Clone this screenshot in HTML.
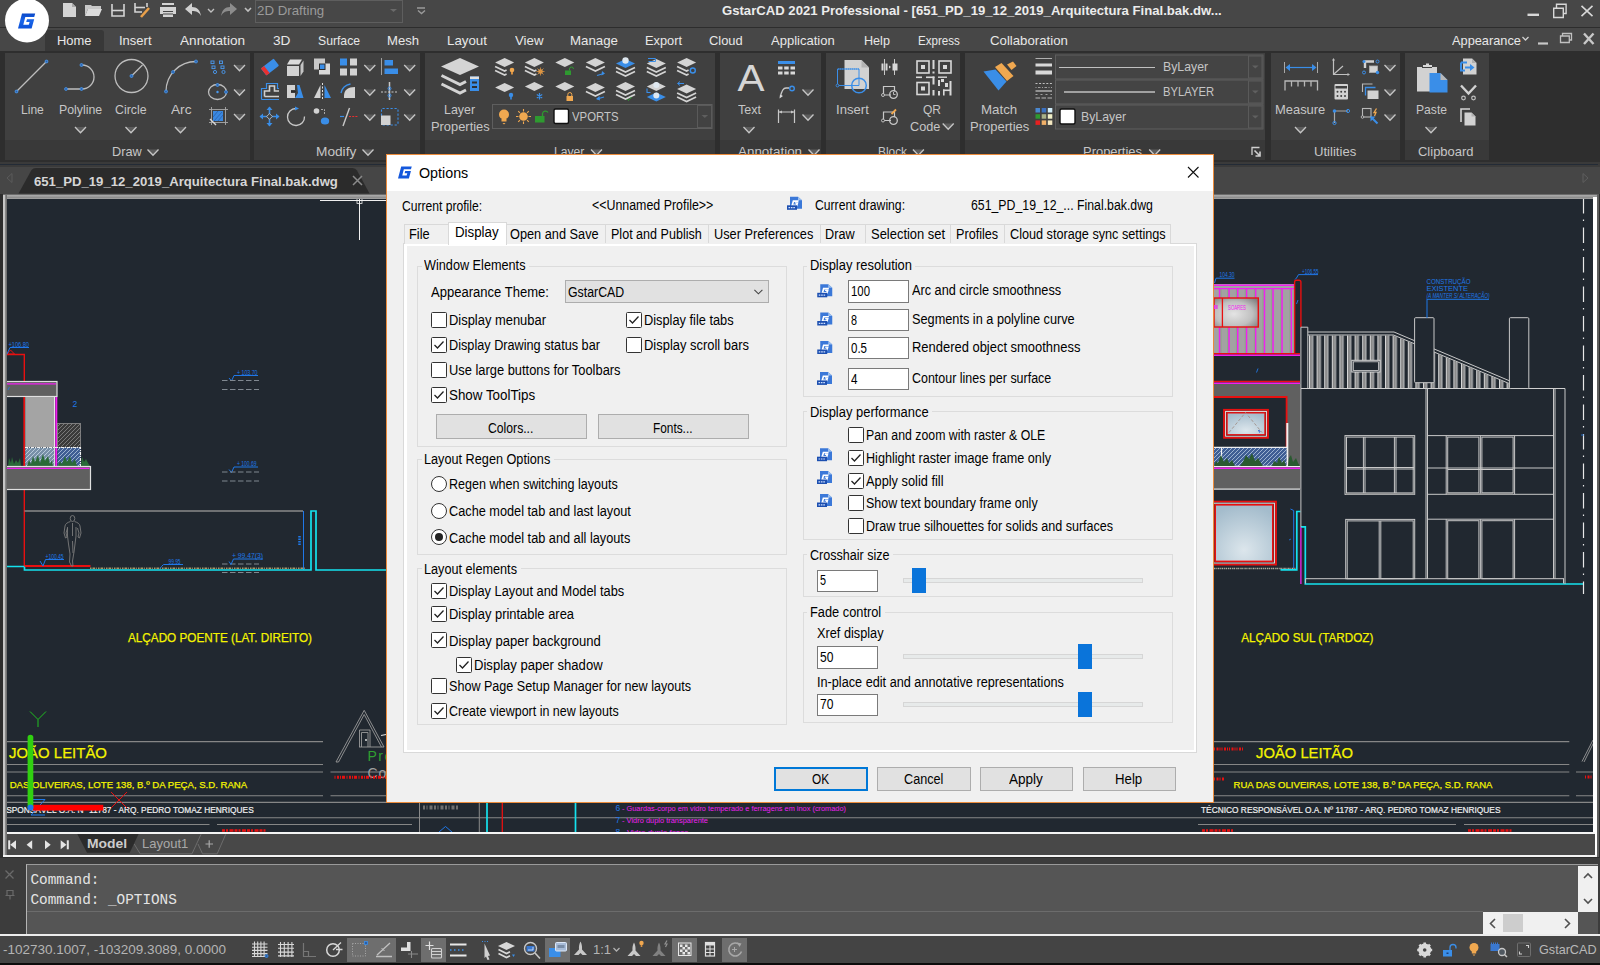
<!DOCTYPE html>
<html><head><meta charset="utf-8">
<style>
*{box-sizing:border-box;margin:0;padding:0}
html,body{width:1600px;height:965px;overflow:hidden;background:#2d2d2d;font-family:"Liberation Sans",sans-serif;}
.abs{position:absolute}
#titlebar{position:absolute;left:0;top:0;width:1600px;height:27px;background:#474747}
#tabrow{position:absolute;left:0;top:28px;width:1600px;height:23px;background:#474747}
#ribbon{position:absolute;left:0;top:51px;width:1600px;height:111px;background:#2e2e2e}
.panel{position:absolute;top:2px;height:107px;background:#404040}
.panel .ptitle{position:absolute;left:0;right:0;bottom:0;height:20px;background:#393939;color:#b8b8b8;font-size:14px;text-align:center;line-height:20px}
.mt{position:absolute;top:4px;color:#e6e6e6;font-size:14px;line-height:16px;white-space:nowrap}
.rl{position:absolute;color:#c4c4c4;font-size:13px;line-height:18px;white-space:nowrap;text-align:center}
#filetabs{position:absolute;left:0;top:166.700px;width:1600px;height:27.300px;background:#464646}
#draw{position:absolute;left:6px;top:198px;width:1588px;height:634px;background:#212830;overflow:hidden}
#layouttabs{position:absolute;left:6.500px;top:833.700px;width:1588.500px;height:21.100px;background:#484848}
#cmd{position:absolute;left:0;top:858px;width:1600px;height:78px;background:#3c3c3c}
#status{position:absolute;left:0;top:936px;width:1600px;height:29px;background:#444444}
#dlg{position:absolute;left:387px;top:154px;width:827px;height:648px;background:#f0f0f0;border:1px solid #e8893a}
</style></head><body>
<div id="titlebar">
<svg class="abs" style="left:0;top:0" width="460" height="27" viewBox="0 0 460 27">
<!-- new -->
<path d="M63 3h9l4 4v10h-13z" fill="#d4d4d4"/><path d="M72 3l4 4h-4z" fill="#a8a8a8"/>
<!-- open -->
<path d="M85 5h6l1 1h9v3h-13l-3 7z" fill="#c8c8c8"/><path d="M88 9h14l-3 7h-14z" fill="#dcdcdc"/>
<!-- save -->
<path d="M112 4v12h12v-12" fill="none" stroke="#d4d4d4" stroke-width="1.6"/><path d="M112 10.5h12" stroke="#d4d4d4" stroke-width="1.6"/>
<!-- saveas -->
<path d="M135 3v9h7M147 3v4" fill="none" stroke="#d4d4d4" stroke-width="1.6"/><path d="M135 7.5h10" stroke="#d4d4d4" stroke-width="1.6"/><path d="M141 17l8-9" stroke="#e9a04a" stroke-width="2.6"/>
<!-- print -->
<path d="M162 3h12v2h-12zM160 7h16v7h-16zM163 11h10v6h-10z" fill="#d4d4d4"/><path d="M163 11.5h10M163 14h10" stroke="#474747" stroke-width="1"/>
<!-- undo -->
<path d="M185 9l7-6v4c5 0 8 3 9 9c-2-4-5-5-9-5v4z" fill="#d0d0d0"/>
<path d="M208 9l3 3l3-3" fill="none" stroke="#c0c0c0" stroke-width="1.4"/>
<!-- redo -->
<path d="M237 9l-7-6v4c-5 0-8 3-9 9c2-4 5-5 9-5v4z" fill="#8c8c8c"/>
<path d="M245 8l3 3l3-3" fill="none" stroke="#c0c0c0" stroke-width="1.6"/>
<rect x="255.500" y="0.500" width="147" height="22" fill="none" stroke="#5e5e5e"/>
<path d="M390 9l3.500 3l3.500-3z" fill="#6a6a6a"/>
<path d="M417 8h8M418 10.500l3.500 3l3.500-3" fill="none" stroke="#9a9a9a" stroke-width="1.400"/>
</svg>
<svg class="abs" style="left:1520px;top:0" width="80" height="27" viewBox="1520 0 80 27">
<path d="M1527.500 14.800h11.500" stroke="#d8d8d8" stroke-width="2.400"/>
<path d="M1553.700 8.200h9.600v9.300h-9.600zM1556.500 8v-3.800h9.600v9.300h-2.800" fill="none" stroke="#d8d8d8" stroke-width="1.400"/>
<path d="M1581.500 5.800l11 10.400M1592.500 5.800l-11 10.400" stroke="#d8d8d8" stroke-width="1.600"/>
</svg>
</div>
<div id="tabrow"><div class="abs" style="left:45px;top:2px;width:59px;height:21px;background:#383838;border-radius:3px 3px 0 0"></div><svg class="abs" style="left:1518px;top:0" width="82" height="23" viewBox="1518 28 82 23">
<path d="M1522.500 37l3 3l3-3" fill="none" stroke="#d0d0d0" stroke-width="1.300"/>
<path d="M1538 43.500h10" stroke="#c8c8c8" stroke-width="2.200"/>
<path d="M1560.500 36h8.800v6.500h-8.800zM1562.500 35.500v-2h9v6.500h-2" fill="none" stroke="#c0c0c0" stroke-width="1.300"/>
<path d="M1584 33.500l9.500 10.500M1593.500 33.500l-9.500 10.500" stroke="#c8c8c8" stroke-width="2.400"/>
</svg></div>
<svg class="abs" style="left:0;top:0;z-index:5" width="56" height="48" viewBox="0 0 56 48">
<defs><linearGradient id="lg" x1="0" y1="0" x2="0" y2="1"><stop offset="0" stop-color="#0a48c8"/><stop offset="0.500" stop-color="#1a66ea"/><stop offset="1" stop-color="#0a50d8"/></linearGradient></defs>
<circle cx="27" cy="20.500" r="22" fill="#ffffff"/>
<path id="gl" d="M22 13.500H35.200L34.200 17H25.300L23.300 24.800H28.800L29.600 22H26.200L27 19.200H34.200L31.600 28.500H18z" fill="url(#lg)"/>
</svg>
<div id="ribbon">

<div class="panel" style="left:5px;width:245px"><div class="ptitle"></div></div>
<div class="panel" style="left:254px;width:166px"><div class="ptitle"></div></div>
<div class="panel" style="left:425px;width:290px"><div class="ptitle"></div></div>
<div class="panel" style="left:720px;width:101px"><div class="ptitle"></div></div>
<div class="panel" style="left:826px;width:134px"><div class="ptitle"></div></div>
<div class="panel" style="left:965px;width:300px"><div class="ptitle"></div></div>
<div class="panel" style="left:1271px;width:129px"><div class="ptitle"></div></div>
<div class="panel" style="left:1405px;width:84px"><div class="ptitle"></div></div>
</div>
<svg class="abs" style="left:0;top:0" width="1600" height="165" viewBox="0 0 1600 165">
<defs>
<g id="chv"><path d="M-5.500 -3L0 2.800L5.500 -3" fill="#5c5c5c" stroke="#c6c6c6" stroke-width="1.300"/></g>
<g id="chs"><path d="M-4.500 -2.500L0 2.500L4.500 -2.500" fill="#5c5c5c" stroke="#bdbdbd" stroke-width="1.300"/></g>
<g id="hd"><rect x="-1.300" y="-1.300" width="2.600" height="2.600" rx="0.800" fill="#2a5ea8" stroke="#4a9af0" stroke-width="0.900"/></g>
</defs>
<!-- DRAW -->
<g fill="none" stroke="#bdbdbd" stroke-width="1.300">
<path d="M16.500 91.500L46.500 61.500"/>
<path d="M66 89h16a11.700 11.700 0 0 0 0 -24"/>
<circle cx="131.500" cy="76" r="16.500"/><path d="M131.500 76L142.500 65"/>
<path d="M166 91.500C166 74 180 61.500 196 61.500"/>
<ellipse cx="217.500" cy="92" rx="9" ry="7.500"/>
</g>
<use href="#hd" x="16.500" y="91.500"/><use href="#hd" x="46.500" y="61.500"/>
<use href="#hd" x="66" y="89"/><use href="#hd" x="81.500" y="89"/><use href="#hd" x="81.500" y="65"/>
<use href="#hd" x="131.500" y="76"/>
<use href="#hd" x="166" y="91.500"/><use href="#hd" x="173" y="72"/><use href="#hd" x="196" y="61.500"/>
<g fill="none" stroke="#4a9af0" stroke-width="0.900">
<rect x="211" y="61" width="3" height="2.600"/><rect x="219.500" y="61" width="3" height="2.600"/>
<rect x="212" y="66" width="3" height="2.600"/><rect x="221" y="66" width="3" height="2.600"/>
<circle cx="215" cy="72" r="1.600"/><circle cx="223.500" cy="72" r="1.600"/>
</g>
<use href="#hd" x="217.500" y="85" /><use href="#hd" x="226" y="92"/><circle cx="217.500" cy="92" r="1.200" fill="#4a9af0"/>
<rect x="213" y="111" width="10" height="10" fill="#3a88e0"/><path d="M214 121l8-9M213 117l5-6M218 121l5-6" stroke="#2a5ea8" stroke-width="0.800"/>
<path d="M209 109.500h19M209 122.500h19M211.500 107v18M225.500 107v18" stroke="#a8a8a8" stroke-width="0.900" fill="none"/>
<path d="M210 119l6 6" stroke="#d8d8d8" stroke-width="1.400"/>
<use href="#chv" x="239.500" y="68"/><use href="#chv" x="239.500" y="92.500"/><use href="#chv" x="239.500" y="117"/>
<use href="#chv" x="80.500" y="130"/><use href="#chv" x="131" y="130"/><use href="#chv" x="180.500" y="130"/>
<use href="#chv" x="153" y="152.500"/>
<!-- MODIFY -->
<!-- erase -->
<g transform="translate(270 67) rotate(-38)"><rect x="-8" y="-4.500" width="16" height="9" rx="1" fill="#3a8ee8"/><rect x="-8" y="-4.500" width="4" height="9" fill="#e83030"/></g>
<!-- box -->
<path d="M287 66h12v10h-12z" fill="#d2d2d2"/><path d="M287 64.500l3-5h12l-3 5z" fill="#dcdcdc"/><path d="M300.500 65l3-4.500v11l-3 4.500z" fill="#c4c4c4"/>
<!-- copy -->
<path d="M314 58.500h11v11h-11z" fill="#c8c8c8"/><path d="M319 63.500h11v11h-11z" fill="#d8d8d8"/><rect x="319.500" y="64" width="5.500" height="5.500" fill="#3a8ee8" stroke="#2c2c2c" stroke-width="1"/>
<!-- array -->
<rect x="340" y="58.500" width="7" height="7" fill="#3a8ee8"/><rect x="350" y="58.500" width="7" height="7" fill="#d2d2d2"/><rect x="340" y="68.500" width="7" height="7" fill="#d2d2d2"/><rect x="350" y="68.500" width="7" height="7" fill="#d2d2d2"/>
<use href="#chv" x="369.800" y="68"/>
<!-- align -->
<path d="M381.500 58v17" stroke="#a0a0a0" stroke-width="1"/><rect x="384.500" y="60" width="8.500" height="5.500" fill="#3a8ee8"/><rect x="384.500" y="68.500" width="13.500" height="5.500" fill="#3a8ee8"/>
<use href="#chv" x="409.700" y="68"/>
<!-- stretch -->
<path d="M261.500 99.500v-11h5v-5h11v5h1.500M261.500 99.500h17.500" fill="none" stroke="#3a8ee8" stroke-width="1.200"/><path d="M264.500 96.500v-5.500h5v-5h5v5h4.500M264.500 96.500h14.500" fill="none" stroke="#d0d0d0" stroke-width="1.600"/>
<!-- scale/flip -->
<path d="M287 85h8v5h-4v3h4v5h-8z" fill="#d2d2d2"/><path d="M297 85h2.500l4 13h-8.500l3-5z" fill="#3a8ee8"/><path d="M291 91.500h5" stroke="#2c2c2c" stroke-width="1.200"/>
<!-- mirror -->
<path d="M314 98h6.500v-13z" fill="#d2d2d2"/><path d="M324.500 85v13h6.500z" fill="#3a8ee8"/><path d="M322.500 83v16" stroke="#e0e0e0" stroke-width="1" stroke-dasharray="2 1.500"/>
<!-- fillet -->
<path d="M344 98v-2c0-6 4-9 11-9v11z" fill="#d2d2d2"/><path d="M341 93c1-5 4-8 9.500-9" fill="none" stroke="#3a8ee8" stroke-width="1.300"/>
<use href="#chv" x="369.800" y="92.500"/>
<!-- break point -->
<path d="M389.500 82v18" stroke="#c8c8c8" stroke-width="1.500"/><path d="M381 92h17" stroke="#c8c8c8" stroke-width="1.200" stroke-dasharray="2 1.500"/><circle cx="389.500" cy="88.500" r="1.500" fill="none" stroke="#3a8ee8"/><circle cx="389.500" cy="95.500" r="1.500" fill="none" stroke="#3a8ee8"/>
<use href="#chv" x="409.700" y="92.500"/>
<!-- move -->
<path d="M269.500 107.500v18M260.500 116.500h18" stroke="#3a8ee8" stroke-width="1.600"/><path d="M269.500 106.500l3 3.500h-6zM269.500 126.500l3-3.500h-6zM259.500 116.500l3.500-3v6zM279.500 116.500l-3.500-3v6z" fill="#3a8ee8"/><rect x="267.500" y="114.500" width="4" height="4" transform="rotate(45 269.500 116.500)" fill="#404040" stroke="#c8c8c8" stroke-width="0.800"/>
<!-- rotate -->
<path d="M296 108.500a8.500 8.500 0 1 0 8.500 8" fill="none" stroke="#c8c8c8" stroke-width="1.300"/><path d="M295 106.500l4 2l-4 2z" fill="#3a8ee8"/>
<!-- copy obj -->
<circle cx="316.500" cy="111" r="2.800" fill="#d2d2d2"/><path d="M321 109.500h3.500v5" fill="none" stroke="#a8a8a8" stroke-width="1" stroke-dasharray="2 1"/><ellipse cx="325" cy="121" rx="4.200" ry="3.500" fill="#3a8ee8"/>
<!-- trim -->
<path d="M343 126l6.500-18" stroke="#c8c8c8" stroke-width="1.400"/><path d="M340 116.500h4" stroke="#3a8ee8" stroke-width="1.200"/><path d="M349 116.500h9" stroke="#e83030" stroke-width="1.200" stroke-dasharray="2 1.200"/>
<use href="#chv" x="369.800" y="117.500"/>
<!-- scale -->
<rect x="381.500" y="108.500" width="16.500" height="16.500" rx="1" fill="none" stroke="#3a8ee8" stroke-width="1.100" stroke-dasharray="2.200 1.800"/><rect x="381" y="115.500" width="9.500" height="9.500" fill="#d2d2d2"/>
<use href="#chv" x="409.700" y="117.500"/>
<use href="#chv" x="368" y="152.500"/>
<!-- LAYER -->
<defs>
<g id="dm"><path d="M-9.500 0L0 -4.500L9.500 0L0 4.500z" fill="#d4d4d4"/></g>
<g id="dmb"><path d="M-9.500 0L0 -4.500L9.500 0L0 4.500z" fill="#3a8ee8"/></g>
<g id="st"><path d="M-9.500 0L0 4.500L9.500 0" fill="none" stroke="#d4d4d4" stroke-width="1.700"/></g>
<g id="sth"><path d="M-9.500 0L0 4.500L2 3.500" fill="none" stroke="#d4d4d4" stroke-width="1.700"/></g>
</defs>
<path d="M441 66.500L460 58L479 66.500L460 75z" fill="#d4d4d4"/>
<path d="M441.500 75.500L460 84.500L466 81.500M441.500 84L460 93L466 90" fill="none" stroke="#d4d4d4" stroke-width="3"/>
<rect x="470" y="76.500" width="9" height="14.500" fill="#3a8ee8"/><rect x="470" y="76.500" width="9" height="2.500" fill="#e0e0e0"/><rect x="472" y="81.500" width="5" height="2" fill="#2f2f2f"/><rect x="472" y="86" width="5" height="2" fill="#2f2f2f"/>
<!-- row1 -->
<use href="#dm" x="504.600" y="62.500"/><use href="#sth" x="504.600" y="66.500"/><use href="#sth" x="504.600" y="70.500"/>
<circle cx="512" cy="70" r="2.300" fill="#f0a850"/><rect x="511" y="72" width="2" height="2.500" fill="#d89040"/>
<use href="#dm" x="534.400" y="62.500"/><use href="#sth" x="534.400" y="66.500"/><use href="#sth" x="534.400" y="70.500"/>
<circle cx="540.500" cy="71.500" r="2.300" fill="#f0a850"/><path d="M537.500 68.500l6 6M543.500 68.500l-6 6M540.500 67.500v8M536.500 71.500h8" stroke="#d89040" stroke-width="0.800"/>
<use href="#dm" x="564.800" y="62.500"/>
<rect x="565" y="70.500" width="6" height="4.500" fill="#2e9a30"/><path d="M569.500 70.500v-1.500a2 2 0 0 1 4 0" fill="none" stroke="#2e9a30" stroke-width="1"/>
<use href="#dm" x="595.400" y="62.500"/><use href="#st" x="595.400" y="66.500"/>
<path d="M597 75.500l7-2" stroke="#3a8ee8" stroke-width="1.200"/><path d="M602 71l3 2.500l-3.500 2z" fill="#3a8ee8"/>
<use href="#dmb" x="625.500" y="63.500"/><use href="#st" x="625.500" y="67.500"/><use href="#st" x="625.500" y="71.500"/><circle cx="625.500" cy="60.500" r="3.200" fill="#dfe8f0"/>
<use href="#dm" x="656.300" y="63.500"/><use href="#st" x="656.300" y="67.500"/><use href="#st" x="656.300" y="71.500"/><path d="M648 58.500h7.500v3h-7" fill="none" stroke="#3a8ee8" stroke-width="1"/>
<use href="#dm" x="686.600" y="62.500"/><use href="#sth" x="686.600" y="66.500"/><use href="#sth" x="686.600" y="70.500"/><circle cx="692.800" cy="70.500" r="2.500" fill="none" stroke="#3a8ee8" stroke-width="1.400"/>
<!-- row2 -->
<use href="#dm" x="504.600" y="87.500"/><circle cx="511" cy="95" r="2.200" fill="#3a8ee8"/><rect x="510.200" y="97" width="1.600" height="2.500" fill="#3a8ee8"/>
<use href="#dm" x="534.400" y="86.500"/><path d="M539.500 93v6.500M536.800 94.600l5.400 3.300M536.800 97.900l5.400 -3.300" stroke="#3a8ee8" stroke-width="1.200"/>
<use href="#dm" x="564.800" y="86.500"/><rect x="566.500" y="96" width="6.500" height="5" fill="#f0a850"/><path d="M567.800 96v-1.500a2 2 0 0 1 4 0v1.500" fill="none" stroke="#f0a850" stroke-width="1"/>
<use href="#dm" x="595.400" y="87.500"/><use href="#st" x="595.400" y="91.500"/><path d="M597 99l7-2" stroke="#3a8ee8" stroke-width="1.200"/><path d="M599.500 96l-3.500 3l4 1.500z" fill="#3a8ee8"/>
<use href="#dm" x="625.500" y="86.500"/><use href="#st" x="625.500" y="90.500"/><use href="#st" x="625.500" y="94.500"/><path d="M627 99l1.500 1.500l3-3.500" fill="none" stroke="#2e9a30" stroke-width="1"/>
<use href="#dm" x="656.300" y="86.500"/><circle cx="656.300" cy="85" r="3" fill="#dfe8f0"/><use href="#dmb" x="656.300" y="97"/><circle cx="656.300" cy="95.500" r="3" fill="#dfe8f0"/><path d="M647 88.500v4h3.500" fill="none" stroke="#3a8ee8" stroke-width="1.100"/>
<use href="#dm" x="686.600" y="89"/><use href="#st" x="686.600" y="93"/><use href="#st" x="686.600" y="97"/><path d="M678 83.500h6M680 81.500l-2.500 2l2.500 2" fill="none" stroke="#3a8ee8" stroke-width="1"/>
<!-- combo -->
<rect x="492.500" y="104.500" width="219.500" height="24" fill="#424242" stroke="#5e5e5e"/><rect x="697.500" y="105.500" width="14" height="22" fill="none" stroke="#5a5a5a"/>
<path d="M701.500 115l3.300 3l3.300-3z" fill="#5e5e5e"/>
<circle cx="504" cy="114.500" r="5" fill="#f0a850"/><path d="M501.500 119h5v2.500h-5z" fill="#f0a850"/><path d="M502.500 123h3l-1.500 1.500z" fill="#f0a850"/>
<circle cx="523.500" cy="116.500" r="4.300" fill="#f0a850"/><path d="M523.500 109v15M516 116.500h15M518.200 111.200l10.600 10.600M528.800 111.200l-10.600 10.600" stroke="#f0a850" stroke-width="1.100" stroke-dasharray="2.500 10 2.500 0"/>
<rect x="535" y="116" width="9.500" height="6.500" fill="#2e9a30"/><path d="M542.500 116v-2.500a3 3 0 0 1 5.500 -1" fill="none" stroke="#2e9a30" stroke-width="1.300"/>
<rect x="554" y="109" width="14.500" height="14.500" rx="1.500" fill="#ffffff" stroke="#101010" stroke-width="1.400"/>
<use href="#chv" x="596.500" y="152.500"/>
<!-- ANNOTATION -->
<rect x="778" y="61" width="17" height="3" fill="#3a8ee8"/>
<g fill="#d8d8d8"><rect x="778" y="66.500" width="4.500" height="3"/><rect x="784.200" y="66.500" width="4.500" height="3"/><rect x="790.500" y="66.500" width="4.500" height="3"/><rect x="778" y="71.500" width="4.500" height="3"/><rect x="784.200" y="71.500" width="4.500" height="3"/><rect x="790.500" y="71.500" width="4.500" height="3"/></g>
<path d="M780.500 97c1-6 3-9 5.500-9h3" fill="none" stroke="#c8c8c8" stroke-width="1.300"/><path d="M779.500 98.500l0.500-4l3 1.500z" fill="#d8d8d8"/><circle cx="792" cy="88.500" r="2.300" fill="none" stroke="#3a8ee8" stroke-width="1.400"/>
<path d="M778.500 109.500v13.500M794.500 109.500v13.500M779 112h15" fill="none" stroke="#c8c8c8" stroke-width="1.200"/><path d="M779 112l3-1.500v3zM794 112l-3-1.500v3z" fill="#c8c8c8"/>
<use href="#chv" x="808" y="92.500"/><use href="#chv" x="808" y="117.500"/><use href="#chv" x="749" y="130"/><use href="#chv" x="814" y="152.500"/>
<!-- BLOCK -->
<path d="M844.500 60h17l7.500 7.500v21.500h-24.500z" fill="#d2d2d2"/><path d="M861.500 60l7.500 7.500h-7.500z" fill="#b4b4b4"/>
<path d="M837.500 85.500v-16.500h21.500v16.500z" fill="none" stroke="#3a8ee8" stroke-width="1"/><path d="M838 69h21" stroke="#3a8ee8" stroke-width="1.200" stroke-dasharray="1 1"/>
<circle cx="859" cy="85.500" r="7.300" fill="none" stroke="#3a8ee8" stroke-width="1.500"/><circle cx="837.500" cy="85.500" r="1.400" fill="#404040" stroke="#3a8ee8" stroke-width="0.900"/>
<path d="M884.500 59v16M894.500 59v16" stroke="#c8c8c8" stroke-width="1"/><rect x="881.500" y="63.500" width="2" height="7" fill="#d8d8d8"/><rect x="885.500" y="63.500" width="2" height="7" fill="#d8d8d8"/><rect x="892.500" y="63.500" width="5" height="7" fill="#d8d8d8"/><path d="M889 65.500l2 1.500l-2 1.500z" fill="#d8d8d8"/>
<path d="M883.500 94.500v-8h11v5M884 95h7" fill="none" stroke="#c8c8c8" stroke-width="1.200"/><circle cx="893.500" cy="94.500" r="3.800" fill="none" stroke="#c8c8c8" stroke-width="1.300"/><circle cx="883" cy="95" r="1.500" fill="#404040" stroke="#c8c8c8" stroke-width="0.900"/><path d="M893.500 92v2.500h2" fill="none" stroke="#c8c8c8" stroke-width="0.900"/>
<path d="M883.500 120v-8h11v5M884 120.500h7" fill="none" stroke="#c8c8c8" stroke-width="1.200"/><circle cx="893.500" cy="120.500" r="3.800" fill="none" stroke="#c8c8c8" stroke-width="1.300"/><circle cx="883" cy="120.500" r="1.500" fill="#404040" stroke="#c8c8c8" stroke-width="0.900"/><path d="M891.500 114l4.500-4.500" stroke="#f0a850" stroke-width="1.800"/>
<!-- QR -->
<g fill="none" stroke="#d8d8d8" stroke-width="1.600"><rect x="917" y="61" width="12" height="12"/><rect x="939" y="61" width="12" height="12"/><rect x="917" y="82.500" width="12" height="12"/></g>
<g fill="#d8d8d8"><rect x="921" y="65" width="4" height="4"/><rect x="943" y="65" width="4" height="4"/><rect x="921" y="86.500" width="4" height="4"/>
<rect x="932.500" y="60" width="2" height="9"/><rect x="932.500" y="71.500" width="2" height="2"/><rect x="916" y="76.500" width="6" height="1.600"/><rect x="926" y="76.500" width="8.500" height="1.600"/><rect x="932.500" y="76.500" width="2" height="8"/><rect x="932.500" y="90" width="2" height="5.500"/>
<rect x="938" y="76.500" width="9" height="1.400"/><rect x="938" y="80" width="2" height="6"/><rect x="941" y="79" width="3" height="3"/><rect x="945" y="83" width="3" height="4"/><rect x="949.500" y="81" width="2" height="14.500"/><rect x="943" y="89.500" width="8" height="1.600"/><rect x="943" y="89.500" width="1.600" height="6"/><rect x="938" y="91" width="2" height="4.500"/></g>
<use href="#chv" x="948.200" y="126.500"/><use href="#chv" x="918.400" y="152.500"/>
<!-- PROPERTIES -->
<path d="M983.500 71.500L995.500 69.500L1006.500 81.500L998.500 90.500z" fill="#3a8ee8"/><path d="M995 67L1001.500 63L1013.500 76L1007 81z" fill="#f0a850"/><path d="M1007 64.500L1013 61.500L1016.500 66L1011.500 70z" fill="#f0a850"/>
<path d="M1035.500 58.500h16.500" stroke="#b0b0b0" stroke-width="1"/><path d="M1035.500 65h16.500" stroke="#d8d8d8" stroke-width="3"/><path d="M1035.500 72.500h16.500" stroke="#d8d8d8" stroke-width="4"/>
<path d="M1035.500 83.500h16.500" stroke="#c0c0c0" stroke-width="1" stroke-dasharray="2 1.600"/><path d="M1035.500 87.500h16.500" stroke="#a0a0a0" stroke-width="1" stroke-dasharray="1 1.500 2.500 1.500"/><path d="M1035.500 91h16.500" stroke="#b8b8b8" stroke-width="1.400"/><path d="M1035.500 94.500h16.500" stroke="#a0a0a0" stroke-width="1" stroke-dasharray="2 3"/><path d="M1035.500 98h16.500" stroke="#909090" stroke-width="1.400" stroke-dasharray="4.500 1.500"/>
<g><rect x="1035.500" y="108" width="4.500" height="4.500" fill="#4a88d0"/><rect x="1041.700" y="108" width="4.500" height="4.500" fill="#3a70c0"/><rect x="1047.800" y="108" width="4.500" height="4.500" fill="#d0ecf8"/>
<rect x="1035.500" y="114.200" width="4.500" height="4.500" fill="#2e9a30"/><rect x="1041.700" y="114.200" width="4.500" height="4.500" fill="#a8b088"/><rect x="1047.800" y="114.200" width="4.500" height="4.500" fill="#f0f0c8"/>
<rect x="1035.500" y="120.400" width="4.500" height="4.500" fill="#e82020"/><rect x="1041.700" y="120.400" width="4.500" height="4.500" fill="#f0b068"/><rect x="1047.800" y="120.400" width="4.500" height="4.500" fill="#f4e8c0"/></g>
<g fill="#444444" stroke="#5e5e5e"><rect x="1055.500" y="55" width="207.500" height="24"/><rect x="1055.500" y="80" width="207.500" height="24"/><rect x="1055.500" y="105" width="207.500" height="24"/></g>
<g fill="none" stroke="#5a5a5a"><rect x="1248.500" y="56" width="13.500" height="22"/><rect x="1248.500" y="81" width="13.500" height="22"/><rect x="1248.500" y="106" width="13.500" height="22"/></g>
<path d="M1252 65.500l3.300 3l3.300-3zM1252 90.500l3.300 3l3.300-3zM1252 115.500l3.300 3l3.300-3z" fill="#606060"/>
<path d="M1059 67.500h96" stroke="#c0c0c0" stroke-width="1"/><path d="M1064 92h91" stroke="#c0c0c0" stroke-width="1.300"/>
<rect x="1060" y="109" width="15" height="15" rx="1.500" fill="#ffffff" stroke="#101010" stroke-width="1.400"/>
<use href="#chv" x="1154.700" y="152.500"/>
<path d="M1252 155v-7.500h7.500" fill="none" stroke="#d0d0d0" stroke-width="1.300"/><path d="M1254.500 150.500l5.500 5.500M1260 151.500v4.500h-4.500" fill="none" stroke="#d0d0d0" stroke-width="1.600"/>
<!-- UTILITIES -->
<path d="M1284.500 62v11M1317.500 62v11" stroke="#a8a8a8" stroke-width="1"/><path d="M1288 67.500h26" stroke="#3a8ee8" stroke-width="1.200"/><path d="M1285.500 67.500l4.500-3.500v7zM1316.500 67.500l-4.500-3.500v7z" fill="#3a8ee8"/>
<path d="M1285 90.500v-9.500h32.500v9.500M1291.500 81v5.500M1298 81v5.500M1304.500 81v5.500M1311 81v5.500" fill="none" stroke="#b8b8b8" stroke-width="1.300"/>
<path d="M1333.500 59.500v15h15.500M1334 74l9-8" fill="none" stroke="#c0c0c0" stroke-width="1.200"/><path d="M1333.500 58l1.500 2.500h-3zM1350 74.500l-2.500-1.500v3z" fill="#c0c0c0"/>
<rect x="1334.500" y="84" width="13.500" height="15.500" rx="1" fill="#d2d2d2"/><rect x="1335.500" y="86" width="11.500" height="2.500" fill="#404040"/><g fill="#404040"><circle cx="1337.500" cy="91.800" r="1"/><circle cx="1341.200" cy="91.800" r="1"/><circle cx="1345" cy="91.800" r="1"/><circle cx="1337.500" cy="96" r="1"/><circle cx="1341.200" cy="96" r="1"/><circle cx="1345" cy="96" r="1"/></g>
<path d="M1334.500 111h13.500M1334.500 111v12" fill="none" stroke="#a8a8a8" stroke-width="1.200"/><circle cx="1334.500" cy="111" r="1.800" fill="#3a8ee8"/><circle cx="1348" cy="111" r="1.600" fill="none" stroke="#3a8ee8"/><circle cx="1334.500" cy="123" r="1.600" fill="none" stroke="#3a8ee8"/>
<path d="M1365 68v-6.500h9" fill="none" stroke="#d2d2d2" stroke-width="2.400"/><rect x="1369.500" y="66" width="8" height="6.500" fill="#d2d2d2" stroke="#b0b0b0" stroke-width="0.800"/><circle cx="1364" cy="61.500" r="1.500" fill="#3a8ee8"/><circle cx="1377.500" cy="61.500" r="1.500" fill="none" stroke="#3a8ee8"/><circle cx="1364" cy="72.500" r="1.500" fill="none" stroke="#3a8ee8"/><circle cx="1377.500" cy="72.500" r="1.700" fill="#3a8ee8"/>
<path d="M1362.500 92v-8h10" fill="none" stroke="#b8b8b8" stroke-width="1.100"/><path d="M1365.500 95.500v-8h10" fill="none" stroke="#3a8ee8" stroke-width="1.300"/><rect x="1367.500" y="90.500" width="11" height="8.500" fill="#d2d2d2"/>
<rect x="1362.500" y="108.500" width="8.500" height="8.500" fill="none" stroke="#b8b8b8" stroke-width="1.100"/><circle cx="1362.500" cy="117" r="1.300" fill="#404040" stroke="#c8c8c8" stroke-width="0.800"/><path d="M1376.500 108.500l-2.500 4h2l-1.500 3.500" fill="none" stroke="#f0a850" stroke-width="1.300"/><path d="M1371 117l6.500 6.500" stroke="#3a8ee8" stroke-width="2"/><path d="M1370.500 116.500h5l-5 5z" fill="#3a8ee8"/>
<use href="#chv" x="1390" y="68"/><use href="#chv" x="1390" y="92.500"/><use href="#chv" x="1390" y="117.500"/><use href="#chv" x="1300.500" y="130"/>
<!-- CLIPBOARD -->
<path d="M1417 67h20v24.500h-20z" fill="#d2d2d2"/><path d="M1423 67v-2h3v-1.500h3v1.500h3v2z" fill="#d8d8d8"/><path d="M1422 67.500h10" stroke="#404040" stroke-width="1"/>
<path d="M1429.500 73h11l7 7v12.500h-18z" fill="#3a8ee8"/><path d="M1440.500 73l7 7h-7z" fill="#b8b8b8"/>
<path d="M1463 58.500h9l4.500 4.500v11.500h-13.500z" fill="#d2d2d2"/><path d="M1472 58.500l4.500 4.500h-4.500z" fill="#b0b0b0"/><path d="M1461 62.500h6M1461 62.500v8h4" fill="none" stroke="#3a8ee8" stroke-width="2"/><path d="M1465 67.500h6" stroke="#3a8ee8" stroke-width="2"/><path d="M1470 64l4.500 3.500l-4.500 3.500z" fill="#3a8ee8"/>
<path d="M1461 85.500l7.500 8l7.500-8" fill="none" stroke="#d2d2d2" stroke-width="2.400"/><circle cx="1463.500" cy="98" r="1.800" fill="none" stroke="#c0c0c0" stroke-width="1.200"/><circle cx="1473.500" cy="98" r="1.800" fill="none" stroke="#c0c0c0" stroke-width="1.200"/>
<path d="M1461 122v-13h9" fill="none" stroke="#d2d2d2" stroke-width="1.600"/><path d="M1464.500 112.500h7l4 4v9h-11z" fill="#d2d2d2"/><path d="M1471.500 112.500l4 4h-4z" fill="#b0b0b0"/>
<use href="#chv" x="1431" y="130"/>
</svg>
<div class="abs" style="left:734px;top:55.500px;width:34px;text-align:center;font-size:37.500px;line-height:44px;color:#d6d6d6;transform:scaleX(1.080)">A</div>
<div class="abs" style="left:0;top:0;width:1600px;height:165px;z-index:4;pointer-events:none">
<style>.rt{position:absolute;white-space:nowrap;font-size:13px;line-height:16px;transform-origin:0 0}</style>
<span class="rt" style="left:722.100px;top:3px;transform:scaleX(1.0091);font-size:13px;font-weight:bold;color:#ececec;">GstarCAD 2021 Professional - [651_PD_19_12_2019_Arquitectura Final.bak.dw...</span>
<span class="rt" style="left:256.600px;top:2.800px;transform:scaleX(1.0216);font-size:13px;color:#9a9a9a;">2D Drafting</span>
<span class="rt" style="left:57.100px;top:32.820px;transform:scaleX(0.9571);font-size:13.500px;color:#e8e8e8;">Home</span>
<span class="rt" style="left:119.100px;top:32.820px;transform:scaleX(0.9630);font-size:13.500px;color:#e8e8e8;">Insert</span>
<span class="rt" style="left:180.100px;top:32.820px;transform:scaleX(1.0073);font-size:13.500px;color:#e8e8e8;">Annotation</span>
<span class="rt" style="left:272.600px;top:32.820px;transform:scaleX(1.0127);font-size:13.500px;color:#e8e8e8;">3D</span>
<span class="rt" style="left:317.600px;top:32.820px;transform:scaleX(0.9031);font-size:13.500px;color:#e8e8e8;">Surface</span>
<span class="rt" style="left:387.100px;top:32.820px;transform:scaleX(0.9695);font-size:13.500px;color:#e8e8e8;">Mesh</span>
<span class="rt" style="left:447.100px;top:32.820px;transform:scaleX(0.9860);font-size:13.500px;color:#e8e8e8;">Layout</span>
<span class="rt" style="left:514.600px;top:32.820px;transform:scaleX(0.9819);font-size:13.500px;color:#e8e8e8;">View</span>
<span class="rt" style="left:570.100px;top:32.820px;transform:scaleX(0.9836);font-size:13.500px;color:#e8e8e8;">Manage</span>
<span class="rt" style="left:645.100px;top:32.820px;transform:scaleX(0.9484);font-size:13.500px;color:#e8e8e8;">Export</span>
<span class="rt" style="left:709.350px;top:32.820px;transform:scaleX(0.9560);font-size:13.500px;color:#e8e8e8;">Cloud</span>
<span class="rt" style="left:771.400px;top:32.820px;transform:scaleX(0.9634);font-size:13.500px;color:#e8e8e8;">Application</span>
<span class="rt" style="left:864px;top:32.820px;transform:scaleX(0.9336);font-size:13.500px;color:#e8e8e8;">Help</span>
<span class="rt" style="left:918.400px;top:32.820px;transform:scaleX(0.8577);font-size:13.500px;color:#e8e8e8;">Express</span>
<span class="rt" style="left:990.100px;top:32.820px;transform:scaleX(0.9789);font-size:13.500px;color:#e8e8e8;">Collaboration</span>
<span class="rt" style="left:1452.100px;top:32.820px;transform:scaleX(0.9474);font-size:13.500px;color:#e8e8e8;">Appearance</span>
<span class="rt" style="left:20.500px;top:101.620px;transform:scaleX(0.8936);font-size:13.500px;color:#c6c6c6;">Line</span>
<span class="rt" style="left:59.200px;top:101.620px;transform:scaleX(0.9122);font-size:13.500px;color:#c6c6c6;">Polyline</span>
<span class="rt" style="left:115.100px;top:101.620px;transform:scaleX(0.9132);font-size:13.500px;color:#c6c6c6;">Circle</span>
<span class="rt" style="left:170.600px;top:101.620px;transform:scaleX(1.0123);font-size:13.500px;color:#c6c6c6;">Arc</span>
<span class="rt" style="left:111.600px;top:143.820px;transform:scaleX(0.9422);font-size:13.500px;color:#c6c6c6;">Draw</span>
<span class="rt" style="left:316.300px;top:143.820px;transform:scaleX(1.0136);font-size:13.500px;color:#c6c6c6;">Modify</span>
<span class="rt" style="left:444px;top:101.620px;transform:scaleX(0.9185);font-size:13.500px;color:#c6c6c6;">Layer</span>
<span class="rt" style="left:430.600px;top:119.420px;transform:scaleX(0.9535);font-size:13.500px;color:#c6c6c6;">Properties</span>
<span class="rt" style="left:572.100px;top:108.820px;transform:scaleX(0.8411);font-size:13.500px;color:#c6c6c6;">VPORTS</span>
<span class="rt" style="left:553.600px;top:143.820px;transform:scaleX(0.9007);font-size:13.500px;color:#c6c6c6;">Layer</span>
<span class="rt" style="left:737.600px;top:101.620px;transform:scaleX(0.9284);font-size:13.500px;color:#c6c6c6;">Text</span>
<span class="rt" style="left:737.600px;top:143.820px;transform:scaleX(0.9918);font-size:13.500px;color:#c6c6c6;">Annotation</span>
<span class="rt" style="left:836.200px;top:101.620px;transform:scaleX(0.9719);font-size:13.500px;color:#c6c6c6;">Insert</span>
<span class="rt" style="left:922.600px;top:101.620px;transform:scaleX(0.8889);font-size:13.500px;color:#c6c6c6;">QR</span>
<span class="rt" style="left:910.300px;top:119.420px;transform:scaleX(0.9391);font-size:13.500px;color:#c6c6c6;">Code</span>
<span class="rt" style="left:877.500px;top:143.820px;transform:scaleX(0.8798);font-size:13.500px;color:#c6c6c6;">Block</span>
<span class="rt" style="left:981.100px;top:101.620px;transform:scaleX(0.9867);font-size:13.500px;color:#c6c6c6;">Match</span>
<span class="rt" style="left:970.300px;top:119.420px;transform:scaleX(0.9633);font-size:13.500px;color:#c6c6c6;">Properties</span>
<span class="rt" style="left:1163.200px;top:59.320px;transform:scaleX(0.9103);font-size:13.500px;color:#c6c6c6;">ByLayer</span>
<span class="rt" style="left:1163.200px;top:83.720px;transform:scaleX(0.8321);font-size:13.500px;color:#c6c6c6;">BYLAYER</span>
<span class="rt" style="left:1080.600px;top:108.820px;transform:scaleX(0.9103);font-size:13.500px;color:#c6c6c6;">ByLayer</span>
<span class="rt" style="left:1083.400px;top:143.820px;transform:scaleX(0.9584);font-size:13.500px;color:#c6c6c6;">Properties</span>
<span class="rt" style="left:1275.300px;top:101.620px;transform:scaleX(0.9578);font-size:13.500px;color:#c6c6c6;">Measure</span>
<span class="rt" style="left:1313.500px;top:143.820px;transform:scaleX(0.9716);font-size:13.500px;color:#c6c6c6;">Utilities</span>
<span class="rt" style="left:1416.300px;top:101.620px;transform:scaleX(0.8987);font-size:13.500px;color:#c6c6c6;">Paste</span>
<span class="rt" style="left:1418.100px;top:143.820px;transform:scaleX(0.9605);font-size:13.500px;color:#c6c6c6;">Clipboard</span>
</div>
<div class="abs" style="left:0;top:162px;width:1600px;height:5px;background:#3a3a3a"></div><div class="abs" style="left:0;top:164px;width:1598px;height:1px;background:#232b36"></div>
<div id="filetabs">
<svg class="abs" style="left:0;top:-1.700px" width="1600" height="31" viewBox="0 0 1600 31">


<path d="M18.500 28.500L31.500 5Q33 3 36 3H352.500Q355.500 3 357 5.500L369.500 28.500z" fill="#2b2b2b"/>
<path d="M12 17.500l-5 -4.500l5 -4.500z" fill="none" stroke="#5a5a5a" stroke-width="1"/>
<path d="M1583 8.500l5 4.500l-5 4.500z" fill="none" stroke="#5e5e5e" stroke-width="1"/>
<path d="M353 11l9 9M362 11l-9 9" stroke="#8a8a8a" stroke-width="1.500"/>
</svg>
<div class="abs" style="left:33.600px;top:6.300px;font-size:13px;line-height:18px;font-weight:bold;color:#d6d6d6;white-space:nowrap;transform:scaleX(1.011);transform-origin:0 0" id="ftitle">651_PD_19_12_2019_Arquitectura Final.bak.dwg</div>
</div>
<div id="draw"></div>
<svg class="abs" style="left:0;top:0" width="1600" height="965" viewBox="0 0 1600 965">
<defs>
<clipPath id="dc"><rect x="6" y="198" width="1587" height="634"/></clipPath>
<pattern id="hat1" width="4" height="4" patternUnits="userSpaceOnUse"><rect width="4" height="4" fill="#3a3a3a"/><path d="M-1 5L5 -1M-1 1L1 -1M3 5L5 3" stroke="#8a8a8a" stroke-width="0.800"/></pattern>
<pattern id="hat2" width="4" height="4" patternUnits="userSpaceOnUse"><rect width="4" height="4" fill="#3f5e94"/><path d="M-1 5L5 -1M-1 1L1 -1M3 5L5 3" stroke="#a8bcd8" stroke-width="0.900"/></pattern>
<pattern id="hat3" width="4" height="4" patternUnits="userSpaceOnUse"><rect width="4" height="4" fill="#7890a8"/><path d="M-1 5L5 -1M-1 1L1 -1M3 5L5 3" stroke="#c0d0e0" stroke-width="0.900"/></pattern>
<pattern id="strp" x="1309" width="7.600" height="10" patternUnits="userSpaceOnUse"><rect x="0" y="0" width="1" height="10" fill="#d8d8d8"/><rect x="1" y="0" width="2.200" height="10" fill="#8c8c8c"/><rect x="3.200" y="0" width="1" height="10" fill="#d8d8d8"/></pattern>
<radialGradient id="gl1" cx="0.450" cy="0.550" r="0.700"><stop offset="0" stop-color="#e4e4e4"/><stop offset="0.600" stop-color="#c0c0c0"/><stop offset="1" stop-color="#808080"/></radialGradient>
<radialGradient id="gl2" cx="0.500" cy="0.800" r="0.800"><stop offset="0" stop-color="#dce6ec"/><stop offset="1" stop-color="#a4bccc"/></radialGradient>
</defs>
<g clip-path="url(#dc)">
<!-- ===== LEFT ===== -->
<!-- crosshair -->
<path d="M320 200.500H386M359.500 199V240" stroke="#f0f0f0" stroke-width="1"/><rect x="357" y="198.500" width="5" height="5" fill="none" stroke="#f0f0f0" stroke-width="0.800"/>
<!-- red poly -->
<path d="M7 354.500H24.300V566" fill="none" stroke="#e81010" stroke-width="1.400"/>
<path d="M7 354l3.500-4l4 4z" fill="none" stroke="#e81010" stroke-width="1"/>
<path d="M7 354l3-6.500H29" fill="none" stroke="#1f78e8" stroke-width="1"/><text x="8.5" y="346.8" font-family="Liberation Sans" font-size="7" fill="#1f78e8" textLength="20.5" lengthAdjust="spacingAndGlyphs">+106.80</text>
<!-- slab1 -->
<rect x="6" y="381.500" width="51" height="15" fill="#606060" stroke="#e0e0e0" stroke-width="1.200"/><path d="M6 383.800H56" stroke="#f020f0" stroke-width="1.300"/>
<path d="M8 390l1.500-3" stroke="#1f78e8" stroke-width="0.800"/>
<!-- wall -->
<rect x="25.200" y="397" width="29" height="50" fill="#a4a4a4"/><path d="M54.500 397V466" stroke="#e8e8e8" stroke-width="1"/><path d="M56.300 397V466" stroke="#f020f0" stroke-width="2"/>
<!-- hatch boxes -->
<rect x="57.500" y="423.500" width="23" height="24" fill="url(#hat1)" stroke="#909090" stroke-width="0.800"/>
<rect x="25.200" y="447.500" width="29" height="19" fill="url(#hat3)"/><rect x="57.500" y="447.500" width="23" height="19" fill="url(#hat2)"/>
<path d="M25 447.500H80.500V466" fill="none" stroke="#f0f0f0" stroke-width="1.100" stroke-dasharray="3 1 1 1"/>
<path d="M24.300 397V466" stroke="#e81010" stroke-width="1.400"/>
<!-- plants -->
<g fill="#2a6a38"><path d="M8 466l1-8l2 5l1-6l2 7l2-4l2 3l2-5l1 8z"/><path d="M27 466l2-6l2 4l2-8l2 6l3-7l2 8l3-9l2 7l3-5l2 8l2-4l1 7z"/><path d="M58 466l2-5l2 3l3-8l2 6l3-6l2 7l3-4l2 7z"/><path d="M81 466l1-9l2 5l2-3l2 4l2 3z"/></g>
<!-- slab2 -->
<rect x="6" y="466.500" width="84.500" height="23" fill="#606060" stroke="#e0e0e0" stroke-width="1.200"/><path d="M6 468.300H89.500" stroke="#f020f0" stroke-width="1.300"/>
<text x="72.500" y="407" font-family="Liberation Sans" font-size="8.500" fill="#1f78e8">2</text>
<!-- dims middle -->
<g stroke="#1f78e8" fill="none" stroke-width="1"><path d="M229 378l2.500 3l2.500-5.500H258"/><text x="237" y="374.6" font-family="Liberation Sans" font-size="7" fill="#1f78e8" textLength="20.5" lengthAdjust="spacingAndGlyphs" stroke="none" fill="#1f78e8">+ 103.70</text>
<path d="M229 469.500l2.500 3l2.500-5.500H258"/><text x="237" y="466" font-family="Liberation Sans" font-size="7" fill="#1f78e8" textLength="19.5" lengthAdjust="spacingAndGlyphs" stroke="none">+ 100.69</text></g>
<g stroke="#808890" stroke-width="1" stroke-dasharray="5.500 2.500"><path d="M222 380.500H259M222 389.500H259M222 472H259M222 481H259M222 564H259M222 572.500H259"/></g>
<!-- ground -->
<path d="M24.500 511H303" stroke="#8a8a8a" stroke-width="1.600"/>
<path d="M303.500 511V570" stroke="#1f78e8" stroke-width="1"/><path d="M299.500 536v9" stroke="#1f78e8" stroke-width="2.500" stroke-dasharray="1.500 1"/>
<path d="M90 568.300H306" stroke="#a89868" stroke-width="1.600" stroke-dasharray="1.500 1 2.500 0.800 1 1.200"/>
<path d="M6 566.500H24.500V570H311V511H316V570H386" fill="none" stroke="#14e2ee" stroke-width="1.700"/>
<path d="M24.500 566H90.500" stroke="#e81010" stroke-width="1.800"/>
<!-- person -->
<g fill="none" stroke="#7c7c7c" stroke-width="0.900"><ellipse cx="72.500" cy="518.500" rx="2.300" ry="3"/><path d="M70.500 521.500c-3 1-5 2-5.500 4.500l-1 7l1.500 5l1.500-1l-1-4l1.500-5M74.500 521.500c3 1 5 2 5.500 4.500l1 7l-1.500 5l-1.500-1l1-4l-1.500-5M67.500 527v9l1 8l1.500 10l-0.500 8l2 4h1.500l-0.500-5l1.500-9l1-8l1-8v-9M72.500 523v13M72.500 541l0.500 12"/></g>
<!-- dims bottom -->
<g stroke="#1f78e8" fill="none" stroke-width="1"><path d="M40 561l3 5l2.500-6.500H64"/><text x="45.5" y="559" font-family="Liberation Sans" font-size="7" fill="#1f78e8" textLength="18.0" lengthAdjust="spacingAndGlyphs" stroke="none">+100.45</text>
<path d="M160 568.500l1.500-2l2-2H183"/><text x="168.5" y="563.5" font-family="Liberation Sans" font-size="7" fill="#1f78e8" textLength="12.0" lengthAdjust="spacingAndGlyphs" stroke="none">99.95</text>
<path d="M229 561.500l2 3l2.500-5.500H263"/><text x="232" y="557.7" font-family="Liberation Sans" font-size="7" fill="#1f78e8" textLength="31" lengthAdjust="spacingAndGlyphs" stroke="none">+ 99.47(3)</text></g>
<text x="128" y="642.300" font-family="Liberation Sans" font-size="13.200" fill="#f4f400" stroke="#f4f400" stroke-width="0.250" textLength="184" lengthAdjust="spacingAndGlyphs">ALÇADO POENTE (LAT. DIREITO)</text>
<!-- title block left -->
<g stroke="#868686" stroke-width="1.100"><path d="M6 741.600H323M6 764.500H323M6 772H323M330.500 772H386M6 795.800H323M330.500 795.800H386M6 802.400H1593M6 817.800H1593M6 824.500H209.500M217 824.500H412"/></g>
<text x="9" y="758" font-family="Liberation Sans" font-size="15" fill="#f4f400" stroke="#f4f400" stroke-width="0.250" textLength="98" lengthAdjust="spacingAndGlyphs">JOÃO LEITÃO</text>
<text x="9.700" y="787.800" font-family="Liberation Sans" font-size="9.800" fill="#f4f400" stroke="#f4f400" stroke-width="0.250" textLength="237.500" lengthAdjust="spacingAndGlyphs">DAS OLIVEIRAS, LOTE 138, B.º DA PEÇA, S.D. RANA</text>
<text x="6.200" y="813" font-family="Liberation Sans" font-size="9" fill="#f0f0f0" stroke="#f0f0f0" stroke-width="0.200" textLength="247.500" lengthAdjust="spacingAndGlyphs">SPONSÁVEL O.A. Nº 11787 - ARQ. PEDRO TOMAZ HENRIQUES</text>
<path d="M222 830.500h45" stroke="#e81010" stroke-width="2.500" stroke-dasharray="3 1 2 1.500 4 1"/>
<!-- logo -->
<g fill="none" stroke="#9a9a9a" stroke-width="0.900"><path d="M336 762L364.200 710.300L384 747M338.500 762L364.200 714.500L381.500 747"/><path d="M336 762h2.500M359 747H384M359.500 747V730h10.500v17M361.500 747V732.500h6.500v14.500"/></g><circle cx="366" cy="740" r="0.900" fill="#f0f0f0"/>
<text x="367.500" y="760.500" font-family="Liberation Sans" font-size="14" fill="#30a030" letter-spacing="1.500">Pro</text>
<text x="367.500" y="778" font-family="Liberation Sans" font-size="14" fill="#a0a0a0" letter-spacing="1">Co</text>
<path d="M334.500 777.200h52" stroke="#e81010" stroke-width="3" stroke-dasharray="1 1.500 2 1 1 1 3 1.500"/>
<path d="M381 735.500l5 -1" stroke="#e0e0e0" stroke-width="1.200"/>
<!-- UCS -->
<path d="M30 711.500L38 719.500L46 711.500M38 719.500V727" fill="none" stroke="#20c020" stroke-width="1"/>
<path d="M31 799.500H45L31 815H45" fill="none" stroke="#1f78e8" stroke-width="1"/>
<path d="M111 792L127 808M127 792L111 808" stroke="#e81010" stroke-width="1"/>
<rect x="33" y="804.800" width="70.300" height="5.800" fill="#ff0000"/>
<path d="M27.600 807V737.500a2.850 2.850 0 0 1 5.700 0V807z" fill="#30d010"/>
<circle cx="30.500" cy="807.500" r="3" fill="#1f78e8"/>
<!-- ===== RIGHT ===== -->
<!-- dims -->
<g stroke="#1f78e8" fill="none" stroke-width="1"><path d="M1214.500 283l1.500-4.800H1234.500"/><text x="1219.5" y="277" font-family="Liberation Sans" font-size="7" fill="#1f78e8" textLength="15.0" lengthAdjust="spacingAndGlyphs" stroke="none">104.30</text>
<path d="M1295 279.500l1.500-1.500l2-3.400H1318"/><text x="1302" y="273.8" font-family="Liberation Sans" font-size="7" fill="#1f78e8" textLength="16.5" lengthAdjust="spacingAndGlyphs" stroke="none">+106.55</text></g>
<!-- pink paneling -->
<rect x="1214" y="284" width="81" height="70" fill="#a2a2a2"/>
<g stroke="#f020f0" stroke-width="1.600"><path d="M1219.600 289V353M1229 289V353M1237.700 289V353M1246.500 289V353M1255.600 289V353M1264.400 289V353M1273 289V353M1282 289V353M1291.200 289V353"/><path d="M1214 285.200H1295M1214 288.600H1295" stroke-width="1.400"/></g>
<g stroke="#78b070" stroke-width="0.600"><path d="M1221 289V353M1227.700 289V353M1236.400 289V353M1245.200 289V353M1254.300 289V353M1263 289V353M1271.700 289V353M1280.700 289V353M1290 289V353"/></g>
<rect x="1214" y="298" width="44.300" height="29" fill="url(#gl1)" stroke="#e81010" stroke-width="1.400"/><path d="M1222.400 298V327" stroke="#e81010" stroke-width="1.300"/>
<text x="1228" y="309.8" font-family="Liberation Sans" font-size="6.5" fill="#f020f0" textLength="18" lengthAdjust="spacingAndGlyphs">SOARES</text><path d="M1214 307h3.500" stroke="#f020f0" stroke-width="4" stroke-dasharray="1.500 0.800"/>
<path d="M1214 353.800H1300" stroke="#e81010" stroke-width="1.400"/><path d="M1214 355.200H1300" stroke="#f020f0" stroke-width="1.400"/>
<path d="M1294.600 354V282a1.800 1.800 0 0 1 1.800-1.800h2.700a1.800 1.800 0 0 1 1.800 1.800V327" fill="none" stroke="#e81010" stroke-width="1.400"/>
<path d="M1296.500 304l1.500-4M1256.500 372.500l1.500-4" stroke="#1f78e8" stroke-width="0.900"/>
<!-- storey band -->
<path d="M1214 381.500H1300" stroke="#e81010" stroke-width="1.400"/><path d="M1214 383.200H1300" stroke="#f020f0" stroke-width="1.400"/>
<rect x="1214" y="384" width="86.500" height="105" fill="#606060"/>
<rect x="1214" y="397" width="72.500" height="50" fill="#212830"/><path d="M1214 397H1286.600V447" fill="none" stroke="#e81010" stroke-width="1.800"/>
<!-- small window -->
<rect x="1224" y="409.800" width="44" height="28" fill="none" stroke="#e81010" stroke-width="1.800"/><rect x="1225.600" y="411.400" width="40.800" height="24.800" fill="none" stroke="#e8e8e8" stroke-width="1"/><rect x="1227" y="412.800" width="38" height="22" fill="url(#gl2)" stroke="#e81010" stroke-width="1.400"/>
<path d="M1229 432.500L1245.500 412.500L1262 432.500" fill="none" stroke="#a09088" stroke-width="0.900" stroke-dasharray="3 2"/><path d="M1258 431c1.500-1 2.500 0 1.500 1.500" fill="none" stroke="#1a50d0" stroke-width="1"/>
<path d="M1287.300 423V466" stroke="#f0f0f0" stroke-width="2"/>
<!-- planter -->
<rect x="1214" y="447.500" width="72.500" height="18.500" fill="url(#hat2)"/>
<path d="M1214 447.300H1287M1214 466.300H1300" stroke="#f0f0f0" stroke-width="1.300"/><path d="M1221.500 447.500V466" stroke="#f0f0f0" stroke-width="1.200"/>
<g fill="#2a5a30"><path d="M1214 466l2-5l2 2l3-8l3 7l3-4l2 5l3-3l3 6z"/><path d="M1240 466l3-4l3-7l3 4l3-6l3 8l3-3l3 5l2 3z"/><path d="M1272 466l2-5l3 2l2-6l3 6l2-3l2 6z"/><path d="M1288 466l1-8l2-3l2 7l3-4l2 5l2 3z"/></g>
<path d="M1214 468.200H1300" stroke="#f020f0" stroke-width="1.400"/>
<path d="M1214 489.200H1300" stroke="#e0e0e0" stroke-width="1.300"/>
<!-- big window -->
<rect x="1212" y="501.600" width="64" height="63" fill="none" stroke="#e81010" stroke-width="1.800"/><rect x="1213.600" y="503.200" width="60.800" height="59.800" fill="none" stroke="#e8e8e8" stroke-width="1"/><rect x="1215.200" y="504.800" width="57.600" height="56.600" fill="url(#gl2)" stroke="#e81010" stroke-width="1.600"/>
<path d="M1214 568.500H1296" stroke="#b0b0a0" stroke-width="1.600" stroke-dasharray="1.500 0.800 1 0.600"/>
<path d="M1290.500 509l3.200 1.500V568" fill="none" stroke="#1f78e8" stroke-width="1"/><path d="M1289 540l2-1" stroke="#1f78e8" stroke-width="0.800"/>
<path d="M1280.500 569.800H1296.800V511.500H1300.500" fill="none" stroke="#14e2ee" stroke-width="1.700"/>
<path d="M1300.900 527V584" stroke="#f020f0" stroke-width="1.300"/>
<path d="M1301 526.800H1305.300V584H1583.500" fill="none" stroke="#14e2ee" stroke-width="1.700"/>
<!-- right building -->
<g fill="none" stroke="#c8c8c8" stroke-width="1"><path d="M1300.900 327.200V527M1300.900 327.200H1307.800V388.500"/><path d="M1307.800 332H1394L1527.700 388.500M1307.800 335H1393.500L1521 388.500"/></g>
<path d="M1309 335.500H1393.500L1519 388H1309z" fill="url(#strp)"/>
<path d="M1301 388.500H1565" stroke="#d0d0d0" stroke-width="1.200"/>
<rect x="1351.800" y="360.300" width="28.200" height="11.700" fill="#212830" stroke="#d8d8d8" stroke-width="1"/><rect x="1353.300" y="361.800" width="25.200" height="8.700" fill="none" stroke="#d8d8d8" stroke-width="0.800"/>
<rect x="1414.600" y="317.700" width="19.400" height="65" fill="#212830" stroke="#c8c8c8" stroke-width="1" rx="1"/><rect x="1509.400" y="317.700" width="19.400" height="70.800" fill="#212830" stroke="#c8c8c8" stroke-width="1" rx="1"/>
<g stroke="#1f78e8" fill="none"><path d="M1427 318V299.300H1489" stroke-width="1"/><text x="1426.5" y="284.2" font-family="Liberation Sans" font-size="7.2" fill="#1f78e8" textLength="44.0" lengthAdjust="spacingAndGlyphs" stroke="none">CONSTRUÇÃO</text><text x="1426.5" y="291.2" font-family="Liberation Sans" font-size="7.2" fill="#1f78e8" textLength="41.5" lengthAdjust="spacingAndGlyphs" stroke="none">EXISTENTE</text><text x="1426.5" y="298" font-family="Liberation Sans" font-size="6.8" fill="#1f78e8" textLength="63.0" lengthAdjust="spacingAndGlyphs" stroke="none" font-style="italic">(A MANTER S/ ALTERAÇÃO)</text></g>
<g fill="none" stroke="#c8c8c8" stroke-width="1"><path d="M1426 388.500V578.700M1427.500 388.500V578.700M1553.500 388.500V578.700M1555 388.500V578.700M1565 388.500V584"/>
<!-- upper-left windows -->
<rect x="1345" y="435.600" width="69.700" height="58.800"/><rect x="1346.500" y="437.100" width="66.700" height="55.800"/><path d="M1363.400 437V493M1365 437V493M1394.400 437V493M1396 437V493M1346 467.500H1414M1346 469H1414"/>
<!-- upper-right windows -->
<path d="M1427.500 435.600H1553.500M1427.500 468H1553.500M1427.500 494.300H1553.500M1446.200 435.600V494.300M1480.400 435.600V494.300M1514.600 435.600V494.300"/><rect x="1447.700" y="437.100" width="31.200" height="55.700"/><rect x="1481.900" y="437.100" width="31.200" height="55.700"/><path d="M1447.700 469.500H1513"/>
<!-- lower-left windows -->
<rect x="1345.700" y="519.400" width="69" height="59.300"/><rect x="1347.200" y="520.900" width="66" height="57.800"/><path d="M1379.200 521V578.700M1380.800 521V578.700"/>
<!-- lower-right windows -->
<path d="M1427.500 519.200H1553.500M1446.200 519.200V578.700M1480.400 519.200V578.700M1514.600 519.200V578.700"/><rect x="1447.700" y="520.700" width="31.200" height="58"/><rect x="1481.900" y="520.700" width="31.200" height="58"/>
<path d="M1305.500 578.700H1564M1305.500 578.700V583.500M1563.500 578.700V583.500"/></g>
<path d="M1346 494H1414.500M1447 494H1513" stroke="#9a9a9a" stroke-width="1.600"/>
<!-- dash-dot -->
<path d="M1583.500 198V594" stroke="#e8e8e8" stroke-width="1.200" stroke-dasharray="15.500 6 1.500 6.500"/>
<path d="M1581 435h3" stroke="#1f78e8" stroke-width="0.800"/>
<text x="1241.300" y="642.300" font-family="Liberation Sans" font-size="13.200" fill="#f4f400" stroke="#f4f400" stroke-width="0.250" textLength="132" lengthAdjust="spacingAndGlyphs">ALÇADO SUL (TARDOZ)</text>
<!-- title block right -->
<g stroke="#868686" stroke-width="1.100"><path d="M1213.800 741.600H1569.300M1213.800 764.500H1569.300M1213.800 772H1569.300M1576 772H1593M1213.800 795.800H1569.300M1576 795.800H1593M1198 824.500H1456M1464 824.500H1593"/></g>
<text x="1256" y="758" font-family="Liberation Sans" font-size="15" fill="#f4f400" stroke="#f4f400" stroke-width="0.250" textLength="97" lengthAdjust="spacingAndGlyphs">JOÃO LEITÃO</text>
<text x="1233.500" y="787.800" font-family="Liberation Sans" font-size="9.800" fill="#f4f400" stroke="#f4f400" stroke-width="0.250" textLength="259" lengthAdjust="spacingAndGlyphs">RUA DAS OLIVEIRAS, LOTE 138, B.º DA PEÇA, S.D. RANA</text>
<text x="1201" y="813" font-family="Liberation Sans" font-size="9" fill="#f0f0f0" stroke="#f0f0f0" stroke-width="0.200" textLength="299.500" lengthAdjust="spacingAndGlyphs">TÉCNICO RESPONSÁVEL O.A. Nº 11787 - ARQ. PEDRO TOMAZ HENRIQUES</text>
<path d="M1214 749h30" stroke="#e81010" stroke-width="3" stroke-dasharray="1 1.500 2 1 1 1"/><path d="M1214 779h10" stroke="#e81010" stroke-width="3" stroke-dasharray="1 1.500 2 1"/><path d="M1585 777h8" stroke="#e81010" stroke-width="3" stroke-dasharray="1 1.500 2 1"/>
<path d="M1202 830.500h32M1468 830.500h45" stroke="#e81010" stroke-width="2.500" stroke-dasharray="3 1 2 1.500 4 1"/>
<path d="M1582 761.500L1593 740M1584 762L1595 740" stroke="#9a9a9a" stroke-width="0.900"/>
<!-- ===== BOTTOM STRIP ===== -->
<path d="M419.500 802V832M479.300 802V832" stroke="#8a8a8a" stroke-width="1"/>
<path d="M487 802V832M575.500 802V832" stroke="#14e2ee" stroke-width="1.700"/><path d="M502.300 802V832" stroke="#e81010" stroke-width="1.300"/>
<path d="M423 807.500h35" stroke="#707070" stroke-width="4" stroke-dasharray="2 1.500 1 2 3 1.500"/>
<path d="M439 832l6.500-5.500l6.500 5.500" fill="none" stroke="#1f78e8" stroke-width="1"/>
<text x="615.500" y="811" font-family="Liberation Sans" font-size="8.500" fill="#1f78e8">6</text>
<text x="622" y="811" font-family="Liberation Sans" font-size="8" fill="#f020f0" textLength="224" lengthAdjust="spacingAndGlyphs">- Guardas-corpo em vidro temperado e ferragens em inox (cromado)</text>
<text x="615.500" y="823" font-family="Liberation Sans" font-size="8.500" fill="#1f78e8">7</text>
<text x="622" y="823" font-family="Liberation Sans" font-size="8" fill="#f020f0" textLength="86" lengthAdjust="spacingAndGlyphs">- Vidro duplo transparente</text>
<text x="615.500" y="835" font-family="Liberation Sans" font-size="8.500" fill="#1f78e8">8</text>
<text x="622" y="835" font-family="Liberation Sans" font-size="8" fill="#f020f0">- Vidro duplo fosco</text>
</g>
</svg>
<!-- frame -->
<div class="abs" style="left:3px;top:194px;width:1594.500px;height:5px;background:linear-gradient(#6c6c6c 0,#6c6c6c 1px,#acacac 1px,#a2a2a2 2px,#8e8e8e 3.500px,#a4a4a4 5px)"></div>
<div class="abs" style="left:2.600px;top:195px;width:4px;height:662px;background:linear-gradient(90deg,#c8c8c8 0,#c4c4c4 1.800px,#8c8c8c 2px,#808080 3.200px,#585858 4px)"></div>
<div class="abs" style="left:1593.200px;top:197px;width:4.200px;height:660px;background:#ffffff"></div>
<div class="abs" style="left:1597.400px;top:194px;width:1.200px;height:663px;background:#5e5e5e"></div>
<div class="abs" style="left:6.500px;top:831.700px;width:1588.500px;height:2px;background:#f4f4f4"></div>
<div class="abs" style="left:3px;top:854.800px;width:1594.400px;height:2.200px;background:#f4f4f4"></div>
<div id="layouttabs">
<svg class="abs" style="left:-6.500px;top:0" width="300" height="22" viewBox="0 833.700 300 22">
<path d="M77.200 833.500L87 852.500H129.700L138.700 833.500z" fill="#2b2b2b"/>
<path d="M134.200 843.700L140.200 853.500H192L201 834M198 843.700L202.500 853.500H217.200L225.700 834" fill="none" stroke="#6c6c6c" stroke-width="1"/>
<g fill="#e4e4e4"><rect x="8.200" y="840" width="2" height="9"/><path d="M16 840v9l-5.800-4.500z"/><path d="M32.200 840v9l-5.600-4.500z"/><path d="M45 840v9l5.700-4.500z"/><path d="M60.700 840v9l5.800-4.500z"/><rect x="66.800" y="840" width="2" height="9"/></g>
<path d="M205.500 843.700h7.500M209.200 840v7.500" stroke="#a8a8a8" stroke-width="1.200"/>
</svg>
<div class="abs" style="left:80.300px;top:2px;font-size:13px;line-height:16px;font-weight:bold;color:#cccccc;transform:scaleX(1.070);transform-origin:0 0" id="lt1">Model</div>
<div class="abs" style="left:135.500px;top:2px;font-size:13px;line-height:16px;color:#a8a8a8;transform-origin:0 0" id="lt2">Layout1</div>
</div>
<div id="cmd">
<div class="abs" style="left:26px;top:6px;width:1572px;height:70px;background:#555555;border-left:1px solid #b4b4b4;border-top:1px solid #9a9a9a"></div>
<div class="abs" style="left:27px;top:53px;width:1456px;height:1px;background:#6c6c6c"></div>
<div class="abs" style="left:0;top:76px;width:1600px;height:2px;background:#ececec"></div>
<div class="abs" style="left:1578px;top:8px;width:20px;height:46px;background:#f0f0f0"></div>
<div class="abs" style="left:1483px;top:54px;width:95px;height:22px;background:#f0f0f0"></div>
<div class="abs" style="left:1503px;top:56px;width:20px;height:18px;background:#cdcdcd"></div>
<svg class="abs" style="left:0;top:0" width="1600" height="80" viewBox="0 0 1600 80">
<path d="M5.500 12.500l8 8M13.500 12.500l-8 8" stroke="#6a6a6a" stroke-width="1.300"/>
<path d="M7 32.500h6v5h-6zM5.500 37.500h9M10 37.500v4" fill="none" stroke="#6a6a6a" stroke-width="1.200"/>
<path d="M1584 20l4-4l4 4M1584 41l4 4l4-4" fill="none" stroke="#505050" stroke-width="1.600"/>
<path d="M1495 61l-4.500 4.500l4.500 4.500M1565 61l4.500 4.500l-4.500 4.500" fill="none" stroke="#505050" stroke-width="1.600"/>
</svg>
<div class="abs" style="left:30.500px;top:11.800px;font-family:'Liberation Mono',monospace;font-size:14.350px;line-height:20.500px;color:#e4e4e4;white-space:pre">Command:
Command: _OPTIONS</div>
</div>
<div id="status">
<div class="abs" style="left:0;top:27px;width:1600px;height:2px;background:#0c0c0c"></div>
<div class="abs" style="left:347px;top:1.500px;width:49px;height:24px;background:#6e6e6e"></div>
<div class="abs" style="left:421px;top:1.500px;width:25px;height:24px;background:#6e6e6e"></div>
<div class="abs" style="left:545px;top:1.500px;width:25px;height:24px;background:#6e6e6e"></div>
<div class="abs" style="left:672px;top:1.500px;width:25px;height:24px;background:#6e6e6e"></div>
<div class="abs" style="left:722px;top:1.500px;width:25px;height:24px;background:#6e6e6e"></div>
<svg class="abs" style="left:0;top:0" width="1600" height="29" viewBox="0 936 1600 29">
<g stroke="#d8d8d8" stroke-width="1.100" fill="none">
<path d="M254.500 941.500V957M257.700 941.500V957M260.900 941.500V957M264.100 941.500V957M252 944H267.500M252 947.200H267.500M252 950.400H267.500M252 953.600H267.500M252 956.500H265"/>
<path d="M280.500 942V957M284.300 942V957M288.100 942V957M291.900 942V957M278 944.500H294M278 948.300H294M278 952.100H294M278 955.900H294"/>
</g><circle cx="266.500" cy="956" r="1.500" fill="#2a5ea8" stroke="#3a8ee8" stroke-width="0.800"/>
<path d="M303.500 943V956.500H316M303.500 951.500H308.500V956.500" fill="none" stroke="#767676" stroke-width="1.200"/>
<circle cx="333" cy="950" r="6.300" fill="none" stroke="#d8d8d8" stroke-width="1.500"/><path d="M333 950L341 942.500M336 949.500H342.500" stroke="#d8d8d8" stroke-width="1.300" fill="none"/>
<rect x="352.500" y="943.500" width="13" height="12.500" fill="none" stroke="#a8a8a8" stroke-width="1" stroke-dasharray="1 1.500"/><rect x="364.500" y="941.500" width="3" height="3" fill="#2a5ea8" stroke="#3a8ee8" stroke-width="0.800"/>
<path d="M377 955L390 943M376 956.500H392" stroke="#c0c0c0" stroke-width="1.300" fill="none"/><path d="M381.500 948l3 3" stroke="#c0c0c0" stroke-width="1"/>
<path d="M401 947.500H407V942H410.500V951H401z" fill="#e0e0e0"/><path d="M411.500 951V958M408 954H418" stroke="#8a8a8a" stroke-width="1.100"/>
<path d="M429.500 941.500V950M425.500 945.500H433.500" stroke="#e0e0e0" stroke-width="1.200"/><rect x="431.500" y="948.500" width="10" height="9.500" rx="1" fill="none" stroke="#d0d0d0" stroke-width="1.100"/><path d="M432 951.500H441M432 954.500H441" stroke="#d0d0d0" stroke-width="1"/>
<path d="M450 944.500H466.500M450 955.500H466.500" stroke="#e8e8e8" stroke-width="2"/><path d="M450 950H466" stroke="#3a8ee8" stroke-width="1.300" stroke-dasharray="1.500 2.500"/>
<!-- cursor -->
<path d="M484.500 943.500L490 955.500L488 956L489.500 959.500L487.500 960L486 956.500L484.500 958z" fill="#d0d0d0"/><path d="M482 941.500H489" stroke="#3a8ee8" stroke-width="1" stroke-dasharray="1 1.500"/>
<!-- layers -->
<path d="M498 946L506.500 942L515 946L506.500 950z" fill="#d8d8d8"/><path d="M498.500 949.500L506.500 953.500L510 951.800M498.500 953.500L506.500 957.500L510 955.800" fill="none" stroke="#d8d8d8" stroke-width="1.600"/><path d="M512 954.500l3 0l-1.500 2.500z" fill="#3a8ee8"/>
<!-- magnifier -->
<circle cx="530.500" cy="948.500" r="6" fill="none" stroke="#c8c8c8" stroke-width="1.400"/><path d="M535 953L540 958.500" stroke="#c8c8c8" stroke-width="1.600"/><rect x="526.500" y="946" width="8" height="5.500" fill="#3a78d0"/><path d="M528 950h5v-3" stroke="#e0e8f8" stroke-width="0.800" fill="none"/>
<!-- window icon -->
<rect x="549" y="948" width="11.500" height="9" fill="#3a8ee8"/><rect x="555.500" y="942.500" width="11" height="8.500" rx="1" fill="#a8bcd8" stroke="#dce8f8" stroke-width="1"/><rect x="557.500" y="945" width="7" height="3" fill="#7a8ea8"/>
<!-- anno scale -->
<path d="M580.500 941.500c1.200 2 1.800 5 1.500 8l5 5.500h-4.500l-2-2l-2 2h-4.500l5-5.500c-.3-3 .3-6 1.500-8z" fill="#c8c8c8"/>
<path d="M613.500 948l3 3l3-3" fill="none" stroke="#b0b0b0" stroke-width="1.300"/>
<path d="M634 942.500c1.200 2 1.800 5 1.500 8l5 5.500h-4.500l-2-2l-2 2h-4.500l5-5.500c-.3-3 .3-6 1.500-8z" fill="#c8c8c8"/><circle cx="641.500" cy="943" r="2.200" fill="#f0a850"/><rect x="640.700" y="945" width="1.600" height="2" fill="#d89040"/>
<path d="M659 942.500c1.200 2 1.800 5 1.500 8l5 5.500h-4.500l-2-2l-2 2h-4.500l5-5.500c-.3-3 .3-6 1.500-8z" fill="#808080"/><path d="M667 940.500l-2 3.500h2l-1.500 3" fill="none" stroke="#909090" stroke-width="1.200"/>
<!-- checker -->
<g fill="#e8e8e8"><rect x="678.500" y="943" width="12.500" height="12.500" fill="none" stroke="#e8e8e8" stroke-width="1"/><rect x="680" y="944.500" width="2.500" height="2.500"/><rect x="685" y="944.500" width="2.500" height="2.500"/><rect x="682.500" y="947" width="2.500" height="2.500"/><rect x="687.500" y="947" width="2.500" height="2.500"/><rect x="680" y="949.500" width="2.500" height="2.500"/><rect x="685" y="949.500" width="2.500" height="2.500"/><rect x="682.500" y="952" width="2.500" height="2.500"/><rect x="687.500" y="952" width="2.500" height="2.500"/></g>
<!-- table -->
<rect x="705.500" y="942.500" width="9" height="13.500" fill="none" stroke="#e0e0e0" stroke-width="1.200"/><rect x="705.500" y="942.500" width="9" height="3" fill="#e0e0e0"/><path d="M705.500 949H714.500M705.500 952.500H714.500M710 945.500V956" stroke="#e0e0e0" stroke-width="1"/>
<!-- refresh -->
<path d="M740 945a6.500 6.500 0 1 0 1.500 6.500" fill="none" stroke="#a8a8a8" stroke-width="1.500"/><path d="M737 942.500l4.500 1l-2 3.500z" fill="#a8a8a8"/><path d="M732 949.500h5M734.500 947v5" stroke="#a8a8a8" stroke-width="1"/>
<!-- right icons -->
<g transform="translate(1424.700 950)"><circle r="5" fill="none" stroke="#d8d8d8" stroke-width="3"/><g stroke="#d8d8d8" stroke-width="2.600"><path d="M0 -7.500V7.500M-7.500 0H7.500M-5.300 -5.300L5.300 5.300M5.300 -5.300L-5.300 5.300"/></g><circle r="3.800" fill="#d8d8d8"/><circle r="1.800" fill="#444444"/></g>
<rect x="1443" y="950" width="9" height="6.500" fill="#3a8ee8"/><path d="M1450 950v-2.500a3 3 0 0 1 6 0v1" fill="none" stroke="#3a8ee8" stroke-width="1.300"/><rect x="1446.500" y="952.500" width="2" height="1.500" fill="#1c3e78"/>
<circle cx="1474" cy="947.500" r="4.500" fill="#f0a850"/><path d="M1471.800 951h4.400v2.500h-4.400z" fill="#f0a850"/><path d="M1472.500 954.500h3l-1.500 1.500z" fill="#f0a850"/>
<rect x="1490.500" y="944" width="9" height="7" fill="#3a78d0"/><path d="M1491 943.500h8" stroke="#3a78d0" stroke-width="2" stroke-dasharray="1 1"/><circle cx="1502" cy="952" r="3.500" fill="#505860" stroke="#c8c8c8" stroke-width="1.300"/><path d="M1504.500 954.500l2.500 2.500" stroke="#c8c8c8" stroke-width="1.500"/>
<rect x="1517.500" y="943" width="13" height="13.500" rx="1" fill="none" stroke="#6e6e6e" stroke-width="1"/><path d="M1526 945.500h2.500v2.500M1522 954h-2.500v-2.500" fill="none" stroke="#d0d0d0" stroke-width="1.100"/>
</svg>
<div class="abs" style="left:3px;top:5px;font-size:13.500px;line-height:18px;color:#b4b4b4;white-space:nowrap" id="coords">-102730.1007, -103209.3089, 0.0000</div>
<div class="abs" style="left:593px;top:5px;font-size:13px;line-height:18px;color:#b4b4b4">1:1</div>
<div class="abs" style="left:1539px;top:5px;font-size:13.500px;line-height:18px;color:#b8b8b8;transform:scaleX(0.935);transform-origin:0 0" id="gst">GstarCAD</div>
</div>
<div id="dlgw" class="abs" style="left:0;top:0;width:1600px;height:965px;z-index:10;pointer-events:none">
<style>.t{position:absolute;white-space:nowrap;font-size:14px;line-height:16px;color:#000;transform-origin:0 0}.cb{position:absolute;width:16px;height:16px;background:#fff;border:1px solid #333;border-radius:1.500px}.rb{position:absolute;width:16px;height:16px;background:#fff;border:1px solid #333;border-radius:50%}.ed{position:absolute;background:#fff;border:1px solid #7a7a7a}.bt{position:absolute;background:#e1e1e1;border:1px solid #adadad}.gb{position:absolute;border:1px solid #dcdcdc}</style>
<div class="abs" style="left:386px;top:154px;width:828px;height:649px;background:#f0f0f0;border:1px solid #ec8c3c"></div>
<div class="abs" style="left:387px;top:155px;width:826px;height:36px;background:#ffffff"></div>
<span class="t" style="left:418.900px;top:164.400px;transform:scaleX(0.9521);font-size:15px;line-height:18px;">Options</span>
<div class="abs" style="left:403px;top:243px;width:794px;height:510px;background:#fff;border:1px solid #d9d9d9"></div>
<div class="abs" style="left:407px;top:246px;width:787px;height:504px;background:#f0f0f0"></div>
<div class="abs" style="left:404px;top:224px;width:767px;height:20px;background:#f0f0f0;border:1px solid #d9d9d9;border-bottom:none"></div>
<div class="abs" style="left:506px;top:225px;width:1px;height:18px;background:#d9d9d9"></div>
<div class="abs" style="left:605px;top:225px;width:1px;height:18px;background:#d9d9d9"></div>
<div class="abs" style="left:708px;top:225px;width:1px;height:18px;background:#d9d9d9"></div>
<div class="abs" style="left:820px;top:225px;width:1px;height:18px;background:#d9d9d9"></div>
<div class="abs" style="left:865px;top:225px;width:1px;height:18px;background:#d9d9d9"></div>
<div class="abs" style="left:950px;top:225px;width:1px;height:18px;background:#d9d9d9"></div>
<div class="abs" style="left:1004px;top:225px;width:1px;height:18px;background:#d9d9d9"></div>
<div class="abs" style="left:448px;top:222px;width:59px;height:23px;background:#fff;border:1px solid #d9d9d9;border-bottom:none"></div>
<span class="t" style="left:409px;top:225.850px;transform:scaleX(0.9139);">File</span>
<span class="t" style="left:455px;top:224.050px;transform:scaleX(0.9495);">Display</span>
<span class="t" style="left:510.300px;top:225.850px;transform:scaleX(0.9116);">Open and Save</span>
<span class="t" style="left:611.200px;top:225.850px;transform:scaleX(0.8967);">Plot and Publish</span>
<span class="t" style="left:714.300px;top:225.850px;transform:scaleX(0.9117);">User Preferences</span>
<span class="t" style="left:825.300px;top:225.850px;transform:scaleX(0.9055);">Draw</span>
<span class="t" style="left:871.200px;top:225.850px;transform:scaleX(0.9245);">Selection set</span>
<span class="t" style="left:956px;top:225.850px;transform:scaleX(0.9038);">Profiles</span>
<span class="t" style="left:1010.350px;top:225.850px;transform:scaleX(0.9050);">Cloud storage sync settings</span>
<span class="t" style="left:402.100px;top:198.300px;transform:scaleX(0.8649);">Current profile:</span>
<span class="t" style="left:592.400px;top:196.800px;transform:scaleX(0.8855);">&lt;&lt;Unnamed Profile&gt;&gt;</span>
<span class="t" style="left:815px;top:196.800px;transform:scaleX(0.8699);">Current drawing:</span>
<span class="t" style="left:971px;top:196.800px;transform:scaleX(0.8785);">651_PD_19_12_... Final.bak.dwg</span>
<div class="abs" style="left:417px;top:266px;width:370px;height:181px;border:1px solid #dcdcdc"></div>
<div class="abs" style="left:422px;top:264px;width:107px;height:6px;background:#f0f0f0"></div>
<span class="t" style="left:424.400px;top:257.350px;transform:scaleX(0.9057);">Window Elements</span>
<div class="abs" style="left:417px;top:459px;width:370px;height:96px;border:1px solid #dcdcdc"></div>
<div class="abs" style="left:422px;top:457px;width:132px;height:6px;background:#f0f0f0"></div>
<span class="t" style="left:424.400px;top:451.450px;transform:scaleX(0.9060);">Layout Regen Options</span>
<div class="abs" style="left:417px;top:568px;width:370px;height:157px;border:1px solid #dcdcdc"></div>
<div class="abs" style="left:422px;top:566px;width:99px;height:6px;background:#f0f0f0"></div>
<span class="t" style="left:424.400px;top:560.550px;transform:scaleX(0.9050);">Layout elements</span>
<div class="abs" style="left:803px;top:266px;width:370px;height:131px;border:1px solid #dcdcdc"></div>
<div class="abs" style="left:807px;top:264px;width:108px;height:6px;background:#f0f0f0"></div>
<span class="t" style="left:809.900px;top:257.350px;transform:scaleX(0.9228);">Display resolution</span>
<div class="abs" style="left:803px;top:411px;width:370px;height:129px;border:1px solid #dcdcdc"></div>
<div class="abs" style="left:807px;top:409px;width:125px;height:6px;background:#f0f0f0"></div>
<span class="t" style="left:810px;top:404.050px;transform:scaleX(0.9238);">Display performance</span>
<div class="abs" style="left:803px;top:554px;width:370px;height:43px;border:1px solid #dcdcdc"></div>
<div class="abs" style="left:807px;top:552px;width:86px;height:6px;background:#f0f0f0"></div>
<span class="t" style="left:810px;top:547.150px;transform:scaleX(0.8975);">Crosshair size</span>
<div class="abs" style="left:803px;top:612px;width:370px;height:111px;border:1px solid #dcdcdc"></div>
<div class="abs" style="left:807px;top:610px;width:78px;height:6px;background:#f0f0f0"></div>
<span class="t" style="left:810px;top:604.350px;transform:scaleX(0.9147);">Fade control</span>
<span class="t" style="left:431.200px;top:284.050px;transform:scaleX(0.9311);">Appearance Theme:</span>
<div class="abs" style="left:565px;top:280px;width:204px;height:23px;background:#e1e1e1;border:1px solid #adadad"></div>
<span class="t" style="left:568.400px;top:284.050px;transform:scaleX(0.8813);">GstarCAD</span>
<div class="cb" style="left:431px;top:312px"></div>
<span class="t" style="left:449.350px;top:312.450px;transform:scaleX(0.9227);">Display menubar</span>
<div class="cb" style="left:431px;top:337px"></div>
<svg class="abs" style="left:431px;top:337px" width="16" height="16" viewBox="0 0 16 16"><path d="M3.500 8L6.500 11L12.500 4.500" fill="none" stroke="#222" stroke-width="1.300"/></svg>
<span class="t" style="left:449.350px;top:337.450px;transform:scaleX(0.9064);">Display Drawing status bar</span>
<div class="cb" style="left:431px;top:362px"></div>
<span class="t" style="left:449.350px;top:362.150px;transform:scaleX(0.9196);">Use large buttons for Toolbars</span>
<div class="cb" style="left:431px;top:387px"></div>
<svg class="abs" style="left:431px;top:387px" width="16" height="16" viewBox="0 0 16 16"><path d="M3.500 8L6.500 11L12.500 4.500" fill="none" stroke="#222" stroke-width="1.300"/></svg>
<span class="t" style="left:449.350px;top:387.050px;transform:scaleX(0.9551);">Show ToolTips</span>
<div class="cb" style="left:626px;top:312px"></div>
<svg class="abs" style="left:626px;top:312px" width="16" height="16" viewBox="0 0 16 16"><path d="M3.500 8L6.500 11L12.500 4.500" fill="none" stroke="#222" stroke-width="1.300"/></svg>
<span class="t" style="left:643.800px;top:312.450px;transform:scaleX(0.9136);">Display file tabs</span>
<div class="cb" style="left:626px;top:337px"></div>
<span class="t" style="left:643.800px;top:337.450px;transform:scaleX(0.9242);">Display scroll bars</span>
<div class="cb" style="left:431px;top:583px"></div>
<svg class="abs" style="left:431px;top:583px" width="16" height="16" viewBox="0 0 16 16"><path d="M3.500 8L6.500 11L12.500 4.500" fill="none" stroke="#222" stroke-width="1.300"/></svg>
<span class="t" style="left:449.350px;top:583.050px;transform:scaleX(0.9154);">Display Layout and Model tabs</span>
<div class="cb" style="left:431px;top:606px"></div>
<svg class="abs" style="left:431px;top:606px" width="16" height="16" viewBox="0 0 16 16"><path d="M3.500 8L6.500 11L12.500 4.500" fill="none" stroke="#222" stroke-width="1.300"/></svg>
<span class="t" style="left:449.350px;top:605.950px;transform:scaleX(0.9232);">Display printable area</span>
<div class="cb" style="left:431px;top:632px"></div>
<svg class="abs" style="left:431px;top:632px" width="16" height="16" viewBox="0 0 16 16"><path d="M3.500 8L6.500 11L12.500 4.500" fill="none" stroke="#222" stroke-width="1.300"/></svg>
<span class="t" style="left:449.350px;top:632.750px;transform:scaleX(0.9334);">Display paper background</span>
<div class="cb" style="left:456px;top:657px"></div>
<svg class="abs" style="left:456px;top:657px" width="16" height="16" viewBox="0 0 16 16"><path d="M3.500 8L6.500 11L12.500 4.500" fill="none" stroke="#222" stroke-width="1.300"/></svg>
<span class="t" style="left:474.100px;top:657.450px;transform:scaleX(0.9335);">Display paper shadow</span>
<div class="cb" style="left:431px;top:678px"></div>
<span class="t" style="left:449.350px;top:678.050px;transform:scaleX(0.8988);">Show Page Setup Manager for new layouts</span>
<div class="cb" style="left:431px;top:703px"></div>
<svg class="abs" style="left:431px;top:703px" width="16" height="16" viewBox="0 0 16 16"><path d="M3.500 8L6.500 11L12.500 4.500" fill="none" stroke="#222" stroke-width="1.300"/></svg>
<span class="t" style="left:449.350px;top:703.350px;transform:scaleX(0.8897);">Create viewport in new layouts</span>
<div class="cb" style="left:848px;top:427px"></div>
<span class="t" style="left:865.600px;top:426.850px;transform:scaleX(0.8793);">Pan and zoom with raster &amp; OLE</span>
<div class="cb" style="left:848px;top:450px"></div>
<svg class="abs" style="left:848px;top:450px" width="16" height="16" viewBox="0 0 16 16"><path d="M3.500 8L6.500 11L12.500 4.500" fill="none" stroke="#222" stroke-width="1.300"/></svg>
<span class="t" style="left:865.600px;top:449.950px;transform:scaleX(0.9005);">Highlight raster image frame only</span>
<div class="cb" style="left:848px;top:473px"></div>
<svg class="abs" style="left:848px;top:473px" width="16" height="16" viewBox="0 0 16 16"><path d="M3.500 8L6.500 11L12.500 4.500" fill="none" stroke="#222" stroke-width="1.300"/></svg>
<span class="t" style="left:865.600px;top:472.800px;transform:scaleX(0.9135);">Apply solid fill</span>
<div class="cb" style="left:848px;top:495px"></div>
<span class="t" style="left:865.600px;top:495.450px;transform:scaleX(0.8892);">Show text boundary frame only</span>
<div class="cb" style="left:848px;top:518px"></div>
<span class="t" style="left:865.600px;top:518.300px;transform:scaleX(0.8971);">Draw true silhouettes for solids and surfaces</span>
<div class="abs" style="left:436px;top:414px;width:151px;height:25px;background:#e1e1e1;border:1px solid #adadad"></div>
<span class="t" style="left:488.200px;top:419.550px;transform:scaleX(0.8706);">Colors...</span>
<div class="abs" style="left:598px;top:414px;width:151px;height:25px;background:#e1e1e1;border:1px solid #adadad"></div>
<span class="t" style="left:653.100px;top:419.550px;transform:scaleX(0.8460);">Fonts...</span>
<div class="abs" style="left:774px;top:767px;width:94px;height:24px;background:#e1e1e1;border:2px solid #0078d7"></div>
<span class="t" style="left:812.200px;top:771.450px;transform:scaleX(0.8453);">OK</span>
<div class="abs" style="left:877px;top:767px;width:94px;height:24px;background:#e1e1e1;border:1px solid #adadad"></div>
<span class="t" style="left:903.700px;top:771.450px;transform:scaleX(0.9035);">Cancel</span>
<div class="abs" style="left:980px;top:767px;width:93px;height:24px;background:#e1e1e1;border:1px solid #adadad"></div>
<span class="t" style="left:1008.600px;top:771.450px;transform:scaleX(0.9657);">Apply</span>
<div class="abs" style="left:1083px;top:767px;width:93px;height:24px;background:#e1e1e1;border:1px solid #adadad"></div>
<span class="t" style="left:1115px;top:771.450px;transform:scaleX(0.9454);">Help</span>
<div class="rb" style="left:431px;top:476px"></div>
<span class="t" style="left:449.350px;top:476.050px;transform:scaleX(0.8962);">Regen when switching layouts</span>
<div class="rb" style="left:431px;top:503px"></div>
<span class="t" style="left:449.350px;top:502.800px;transform:scaleX(0.9093);">Cache model tab and last layout</span>
<div class="rb" style="left:431px;top:529px"></div>
<div class="abs" style="left:435px;top:533px;width:8px;height:8px;border-radius:50%;background:#222"></div>
<span class="t" style="left:449.350px;top:529.650px;transform:scaleX(0.9098);">Cache model tab and all layouts</span>
<div class="abs" style="left:848px;top:280px;width:61px;height:23px;background:#fff;border:1px solid #7a7a7a"></div>
<span class="t" style="left:850.600px;top:283.050px;transform:scaleX(0.8127);">100</span>
<div class="abs" style="left:848px;top:309px;width:61px;height:22px;background:#fff;border:1px solid #7a7a7a"></div>
<span class="t" style="left:850.900px;top:311.550px;transform:scaleX(0.7722);">8</span>
<div class="abs" style="left:848px;top:337px;width:61px;height:22px;background:#fff;border:1px solid #7a7a7a"></div>
<span class="t" style="left:850.600px;top:340.250px;transform:scaleX(0.8222);">0.5</span>
<div class="abs" style="left:848px;top:368px;width:61px;height:22px;background:#fff;border:1px solid #7a7a7a"></div>
<span class="t" style="left:850.600px;top:370.550px;transform:scaleX(0.8366);">4</span>
<span class="t" style="left:911.900px;top:282.050px;transform:scaleX(0.9083);">Arc and circle smoothness</span>
<span class="t" style="left:911.900px;top:310.800px;transform:scaleX(0.9090);">Segments in a polyline curve</span>
<span class="t" style="left:911.900px;top:339.300px;transform:scaleX(0.9246);">Rendered object smoothness</span>
<span class="t" style="left:912.200px;top:369.850px;transform:scaleX(0.8904);">Contour lines per surface</span>
<div class="abs" style="left:817px;top:570px;width:61px;height:22px;background:#fff;border:1px solid #7a7a7a"></div>
<span class="t" style="left:819.900px;top:572.450px;transform:scaleX(0.7722);">5</span>
<div class="abs" style="left:817px;top:646px;width:61px;height:23px;background:#fff;border:1px solid #7a7a7a"></div>
<span class="t" style="left:819.900px;top:649.050px;transform:scaleX(0.8623);">50</span>
<div class="abs" style="left:817px;top:694px;width:61px;height:22px;background:#fff;border:1px solid #7a7a7a"></div>
<span class="t" style="left:819.900px;top:696.450px;transform:scaleX(0.8623);">70</span>
<span class="t" style="left:816.600px;top:625.050px;transform:scaleX(0.9091);">Xref display</span>
<span class="t" style="left:816.900px;top:674.300px;transform:scaleX(0.9063);">In-place edit and annotative representations</span>
<div class="abs" style="left:903px;top:578px;width:240px;height:5px;background:#e7eaea;border:1px solid #d6d6d6"></div>
<div class="abs" style="left:912px;top:568px;width:14px;height:25px;background:#0a74da"></div>
<div class="abs" style="left:903px;top:654px;width:240px;height:5px;background:#e7eaea;border:1px solid #d6d6d6"></div>
<div class="abs" style="left:1078px;top:644px;width:14px;height:25px;background:#0a74da"></div>
<div class="abs" style="left:903px;top:702px;width:240px;height:5px;background:#e7eaea;border:1px solid #d6d6d6"></div>
<div class="abs" style="left:1078px;top:692px;width:14px;height:25px;background:#0a74da"></div>
<svg class="abs" style="left:0;top:0" width="1600" height="965" viewBox="0 0 1600 965">
<defs><g id="dwgi"><path d="M3 0h8l4 3.500v8.500h-12z" fill="#3b78d8"/><path d="M11 0l4 3.500h-4z" fill="#9cc0f0"/><path d="M5.800 3.500h6l-0.500 1.600h-4.200l-0.800 2.600h2.600l0.300-1h-1.500l0.400-1.300h3.400l-1.200 4h-6.200z" fill="#ffffff"/><rect x="0" y="8.500" width="10" height="4.500" fill="#1c4fb0"/><path d="M1.500 10.800h7" stroke="#cfe0ff" stroke-width="1.200" stroke-dasharray="1.600 0.800"/></g></defs>
<path transform="translate(398 166.500) scale(0.800) translate(-18 -13.500)" d="M22 13.500H35.200L34.200 17H25.300L23.300 24.800H28.800L29.600 22H26.200L27 19.200H34.200L31.600 28.500H18z" fill="#1458dc"/>
<path d="M1188 167l10.500 10.500M1198.500 167l-10.500 10.500" stroke="#111" stroke-width="1.100"/>
<path d="M754.400 289.800l4 4l4-4" fill="none" stroke="#444" stroke-width="1.100"/>
<use href="#dwgi" x="787" y="196.800"/>
<use href="#dwgi" x="817.250" y="284.300"/>
<use href="#dwgi" x="817.250" y="312.500"/>
<use href="#dwgi" x="817.250" y="341"/>
<use href="#dwgi" x="817" y="371.900"/>
<use href="#dwgi" x="817" y="448.200"/>
<use href="#dwgi" x="817" y="471"/>
<use href="#dwgi" x="817" y="494"/>
</svg>
</div>
</body></html>
